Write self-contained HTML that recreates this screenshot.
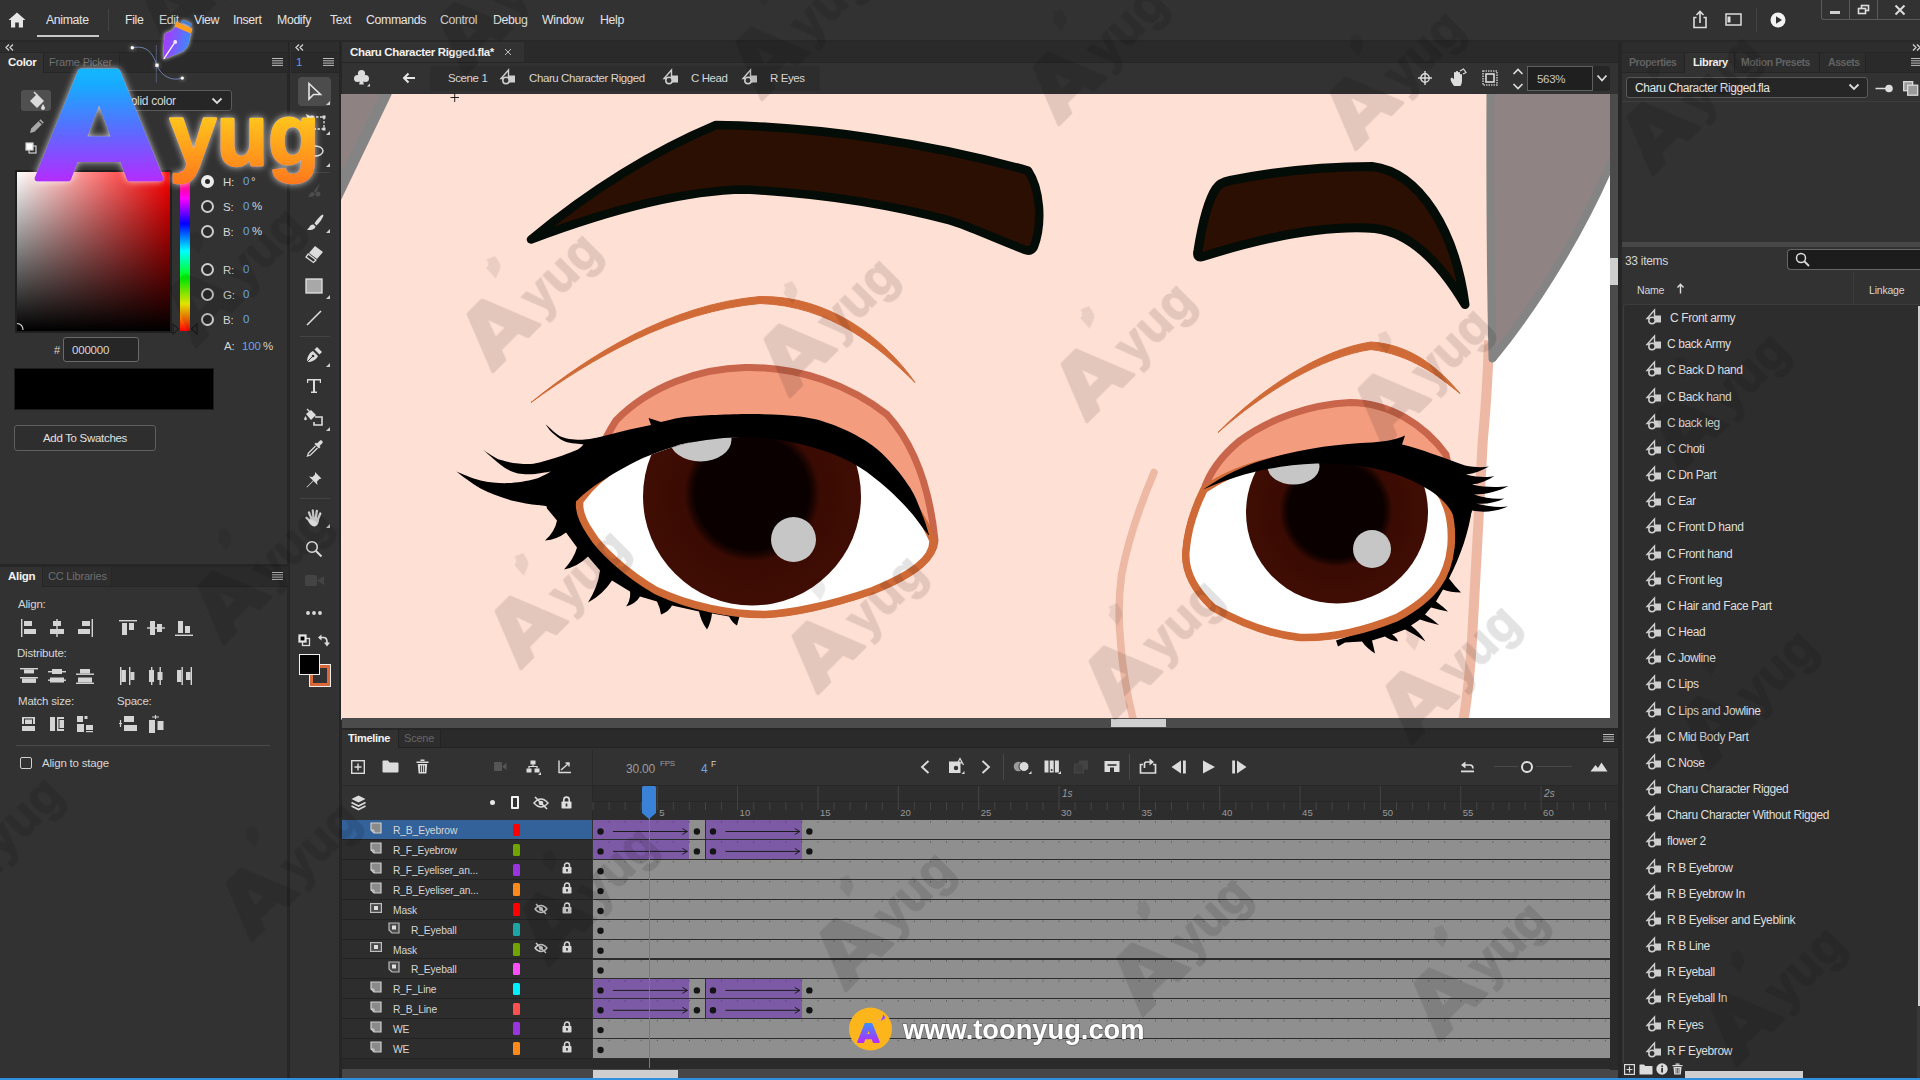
<!DOCTYPE html>
<html lang="en"><head><meta charset="utf-8"><title>Animate - Charu Character Rigged.fla</title>
<style>
*{box-sizing:border-box;margin:0;padding:0}
html,body{width:1920px;height:1080px;overflow:hidden;background:#323232;font-family:"Liberation Sans",sans-serif;font-size:12px;color:#d8d8d8}
.a{position:absolute}
.t{position:absolute;white-space:nowrap;line-height:14px;height:14px;font-size:11.5px;color:#d6d6d6;letter-spacing:-0.2px}
.b{font-weight:bold;color:#f2f2f2}
.dim{color:#6e6e6e}
.blue{color:#6aa5e6}
svg{position:absolute;overflow:visible}
.ic{fill:#dcdcdc}
.ics{fill:none;stroke:#dcdcdc}
</style></head><body>

<!-- p1_frame -->
<div class="a" style="left:0;top:0;width:1920px;height:40px;background:#323232"></div>
<div class="a" style="left:0;top:40px;width:1920px;height:2px;background:#282828"></div>
<svg style="left:8px;top:12px" width="18" height="16" viewBox="0 0 18 16"><path d="M9 0.5 L0.5 8 H3 V15.5 H7.2 V10.5 H10.8 V15.5 H15 V8 H17.5 Z" fill="#e6e6e6"/></svg>
<div class="t" style="left:46px;top:13px;font-size:12.3px;color:#e4e4e4;letter-spacing:-0.35px">Animate</div>
<div class="t" style="left:125px;top:13px;font-size:12.3px;color:#e4e4e4;letter-spacing:-0.35px">File</div>
<div class="t" style="left:159px;top:13px;font-size:12.3px;color:#e4e4e4;letter-spacing:-0.35px">Edit</div>
<div class="t" style="left:194px;top:13px;font-size:12.3px;color:#e4e4e4;letter-spacing:-0.35px">View</div>
<div class="t" style="left:233px;top:13px;font-size:12.3px;color:#e4e4e4;letter-spacing:-0.35px">Insert</div>
<div class="t" style="left:277px;top:13px;font-size:12.3px;color:#e4e4e4;letter-spacing:-0.35px">Modify</div>
<div class="t" style="left:330px;top:13px;font-size:12.3px;color:#e4e4e4;letter-spacing:-0.35px">Text</div>
<div class="t" style="left:366px;top:13px;font-size:12.3px;color:#e4e4e4;letter-spacing:-0.35px">Commands</div>
<div class="t" style="left:440px;top:13px;font-size:12.3px;color:#e4e4e4;letter-spacing:-0.35px">Control</div>
<div class="t" style="left:493px;top:13px;font-size:12.3px;color:#e4e4e4;letter-spacing:-0.35px">Debug</div>
<div class="t" style="left:542px;top:13px;font-size:12.3px;color:#e4e4e4;letter-spacing:-0.35px">Window</div>
<div class="t" style="left:600px;top:13px;font-size:12.3px;color:#e4e4e4;letter-spacing:-0.35px">Help</div>
<div class="a" style="left:37px;top:35px;width:62px;height:2px;background:#c8c8c8"></div>
<div class="a" style="left:108px;top:9px;width:1px;height:22px;background:#444"></div>
<svg style="left:1691px;top:10px" width="18" height="20" viewBox="0 0 18 20"><path class="ics" stroke-width="1.6" d="M5.5 7.5H3V17.5H15V7.5H12.5M9 13V2M5.5 5L9 1.5L12.5 5"/></svg>
<svg style="left:1725px;top:13px" width="18" height="14" viewBox="0 0 18 14"><rect x="1" y="1" width="15" height="11" class="ics" stroke-width="1.5"/><rect x="2.5" y="3.5" width="3" height="6" class="ic"/></svg>
<div class="a" style="left:1756px;top:8px;width:1px;height:24px;background:#444"></div>
<svg style="left:1770px;top:12px" width="16" height="16" viewBox="0 0 16 16"><circle cx="8" cy="8" r="7.5" fill="#f2f2f2"/><path d="M6 4.2V11.8L12 8Z" fill="#323232"/></svg>
<div class="a" style="left:1821px;top:-3px;width:99px;height:23px;border:1px solid #5a5a5a;border-right:none;border-radius:3px 0 0 3px"></div>
<div class="a" style="left:1849px;top:0;width:1px;height:19px;background:#5a5a5a"></div>
<div class="a" style="left:1877px;top:0;width:1px;height:19px;background:#5a5a5a"></div>
<div class="a" style="left:1830px;top:11px;width:10px;height:3px;background:#cfcfcf"></div>
<svg style="left:1857px;top:4px" width="14" height="12" viewBox="0 0 14 12"><rect x="4.5" y="1.5" width="7" height="5" class="ics" stroke-width="1.6"/><rect x="1.5" y="4.5" width="7" height="5" fill="#323232" stroke="#dcdcdc" stroke-width="1.6"/></svg>
<svg style="left:1894px;top:4px" width="12" height="12" viewBox="0 0 12 12"><path d="M1.5 1.5L10.5 10.5M10.5 1.5L1.5 10.5" class="ics" stroke-width="2"/></svg>
<div class="a" style="left:287px;top:42px;width:3px;height:1036px;background:#262626"></div>
<div class="a" style="left:338.500px;top:42px;width:3px;height:1036px;background:#262626"></div>
<div class="a" style="left:1618px;top:42px;width:4px;height:1036px;background:#262626"></div>
<div class="a" style="left:0;top:1078px;width:1920px;height:2px;background:#2f8fe0"></div>
<!-- p2_stage -->
<div class="a" style="left:342px;top:42px;width:1276px;height:21px;background:#2a2a2a"></div>
<div class="a" style="left:342px;top:42px;width:182px;height:21px;background:#323232"></div>
<div class="t b" style="left:350px;top:45px;font-size:11.5px;letter-spacing:-0.35px;color:#f0f0f0">Charu Character Rigged.fla*</div>
<svg style="left:504px;top:48px" width="8" height="8" viewBox="0 0 8 8"><path d="M1 1L7 7M7 1L1 7" stroke="#bdbdbd" stroke-width="1" fill="none"/></svg>
<div class="a" style="left:342px;top:63px;width:1276px;height:31px;background:#323232"></div>
<div class="a" style="left:342px;top:62px;width:1276px;height:1px;background:#262626"></div>
<div class="a" style="left:430px;top:66px;width:390px;height:25px;background:#2d2d2d"></div>
<svg style="left:353px;top:69px" width="18" height="18" viewBox="0 0 18 18"><circle cx="8.5" cy="4.5" r="3.6" class="ic"/><circle cx="4.6" cy="9.5" r="3.6" class="ic"/><circle cx="12.4" cy="9.5" r="3.6" class="ic"/><path d="M7.5 8 H9.5 L10.8 15.5 H6.2 Z" class="ic"/><path d="M14 17.5h3v-3z" class="ic"/></svg>
<svg style="left:402px;top:72px" width="14" height="12" viewBox="0 0 14 12"><path d="M13 6H3M6.5 1.5L2 6L6.5 10.5" stroke="#e6e6e6" stroke-width="2" fill="none"/></svg>
<div class="t" style="left:448px;top:71px;font-size:11.500px;letter-spacing:-0.400px">Scene 1</div>
<svg style="left:499px;top:69px" width="18" height="16" viewBox="0 0 18 16"><path d="M9.5 1 L2 9.5 H9.5Z" fill="none" stroke="#cfcfcf" stroke-width="1.4"/><rect x="9" y="6.5" width="7" height="7" fill="#cfcfcf"/><circle cx="7" cy="11.5" r="3.2" fill="#323232" stroke="#cfcfcf" stroke-width="1.5"/></svg>
<div class="t" style="left:529px;top:71px;font-size:11.500px;letter-spacing:-0.400px">Charu Character Rigged</div>
<svg style="left:662px;top:69px" width="18" height="16" viewBox="0 0 18 16"><path d="M9.5 1 L2 9.5 H9.5Z" fill="none" stroke="#cfcfcf" stroke-width="1.4"/><rect x="9" y="6.5" width="7" height="7" fill="#cfcfcf"/><circle cx="7" cy="11.5" r="3.2" fill="#323232" stroke="#cfcfcf" stroke-width="1.5"/></svg>
<div class="t" style="left:691px;top:71px;font-size:11.500px;letter-spacing:-0.400px">C Head</div>
<svg style="left:741px;top:69px" width="18" height="16" viewBox="0 0 18 16"><path d="M9.5 1 L2 9.5 H9.5Z" fill="none" stroke="#cfcfcf" stroke-width="1.4"/><rect x="9" y="6.5" width="7" height="7" fill="#cfcfcf"/><circle cx="7" cy="11.5" r="3.2" fill="#323232" stroke="#cfcfcf" stroke-width="1.5"/></svg>
<div class="t" style="left:770px;top:71px;font-size:11.500px;letter-spacing:-0.400px">R Eyes</div>
<svg style="left:1418px;top:71px" width="14" height="14" viewBox="0 0 14 14"><circle cx="7" cy="7" r="4.2" class="ics" stroke-width="1.4"/><path d="M7 0V14M0 7H14" class="ics" stroke-width="1.4"/></svg>
<svg style="left:1448px;top:68px" width="20" height="20" viewBox="0 0 20 20"><path d="M6 18 C3 14 2 11 3 10 C4 9.3 5 10 6 11.5 V5 C6 3.6 8 3.6 8 5 V9 V4 C8 2.6 10 2.6 10 4 V9 V5 C10 3.6 12 3.6 12 5 V10 V7 C12 5.6 14 5.6 14 7 V13 C14 15 13 17 12.5 18 Z" class="ic"/><path d="M12 3 L15.5 1 L18 4.5 L15 6" class="ics" stroke-width="1.2"/></svg>
<svg style="left:1482px;top:70px" width="16" height="16" viewBox="0 0 16 16"><rect x="1" y="1" width="14" height="14" fill="none" stroke="#bdbdbd" stroke-width="1.6" stroke-dasharray="1.5 1"/><rect x="4" y="4" width="8" height="8" class="ics" stroke-width="1.6"/></svg>
<svg style="left:1512px;top:67px" width="12" height="24" viewBox="0 0 12 24"><path d="M1.5 7L6 2.5L10.5 7M1.5 17L6 21.5L10.5 17" class="ics" stroke-width="1.7"/></svg>
<div class="a" style="left:1527px;top:66px;width:66px;height:25px;background:#1f1f1f;border:1px solid #5f5f5f"></div>
<div class="t" style="left:1537px;top:72px;font-size:11.500px;color:#c8c8c8;letter-spacing:-0.300px">563%</div>
<div class="a" style="left:1593px;top:66px;width:17px;height:25px;background:#262626;border-radius:0 3px 3px 0"></div>
<svg style="left:1596px;top:74px" width="12" height="9" viewBox="0 0 12 9"><path d="M1.5 1.5L6 6.5L10.5 1.5" class="ics" stroke-width="1.8"/></svg>
<svg style="left:341px;top:93.500px" width="1269" height="625.500" viewBox="341 93.500 1269 625.500">
<defs>
<clipPath id="stg"><rect x="341" y="93.500" width="1269" height="625.500"/></clipPath>
<radialGradient id="irisL" cx="752" cy="493" r="109" gradientUnits="userSpaceOnUse"><stop offset="0" stop-color="#0a0000"/><stop offset="0.520" stop-color="#0a0000"/><stop offset="0.570" stop-color="#1e0501"/><stop offset="0.620" stop-color="#3a0b03"/><stop offset="1" stop-color="#3f0d03"/></radialGradient>
<radialGradient id="irisR" cx="1336" cy="510" r="91" gradientUnits="userSpaceOnUse"><stop offset="0" stop-color="#0a0000"/><stop offset="0.520" stop-color="#0a0000"/><stop offset="0.570" stop-color="#1e0501"/><stop offset="0.620" stop-color="#3a0b03"/><stop offset="1" stop-color="#3f0d03"/></radialGradient>
<clipPath id="eyeL"><path d="M578 500 C600 478 640 454 690 442 C740 432 800 434 850 458 C890 478 915 508 932 540 C934 556 918 572 873 590 C830 605 790 613 765 614 C730 614 690 606 656 590 C625 572 600 548 591 533 C582 520 578 510 578 500Z"/></clipPath>
<clipPath id="eyeR"><path d="M1204 489 C1235 474 1270 464 1316 462 C1360 460 1400 468 1438 494 C1448 505 1453 520 1451 546 C1448 575 1436 596 1397 617 C1360 632 1330 638 1300 637 C1270 634 1240 622 1213 607 C1195 590 1184 570 1186 550 C1188 525 1196 505 1204 489Z"/></clipPath>
</defs>
<g clip-path="url(#stg)">
<rect x="340" y="92" width="1272" height="630" fill="#ffe0d4"/>
<path d="M1612 160 C1580 230 1540 300 1492 360 L1482.800 440 L1472 640 Q1469.500 685 1462.500 726 L1612 726Z" fill="#ffffff"/>
<path d="M1489 340 C1487 400 1483.500 430 1482.800 440 L1472 640 Q1469.500 685 1462.500 726" fill="none" stroke="#edb9a5" stroke-width="10"/>
<path d="M1490.500 86 C1490 200 1491 290 1492.500 358 C1540 300 1585 225 1614 155 L1620 86Z" fill="#908383" stroke="#848484" stroke-width="8" stroke-linejoin="round"/>
<path d="M340 92 L384 92 L340 180Z" fill="#8f8282"/>
<path d="M380.900 92 L392.600 92 L340 201.600 L340 174Z" fill="#848484"/>
<path d="M1154 472 C1140 505 1127 545 1121.600 574 C1118 600 1119 625 1120.500 640 C1122 665 1127 695 1134.500 724" fill="none" stroke="#edb9a5" stroke-width="7.500" stroke-linecap="round"/>
<path d="M531 239 C600 182 660 148 716 124.500 C820 126 930 143 1028 170 C1040 188 1043 222 1034 246 Q1031 252 1024 249 C990 236 970 226 950 220 C890 204 820 193 745 189 C680 190 600 213 531 239Z" fill="#2b0f02" stroke="#040c07" stroke-width="8.500" stroke-linejoin="round"/>
<path d="M1203 256 Q1196 258 1198 250 C1202 225 1208 200 1216 188 Q1220 182 1230 180 C1270 172 1320 166 1372 166 C1420 172 1455 230 1465 304 C1440 262 1410 232 1375 228 C1320 224 1260 238 1203 256Z" fill="#2b0f02" stroke="#040c07" stroke-width="9" stroke-linejoin="round"/>
<path d="M531 402 C590 354 670 304 760 296 C830 295 885 339 915 382 C880 347 830 305 760 303 C672 311 590 359 531 402Z" fill="#d06a36" stroke="#d06a36" stroke-width="1"/>
<path d="M1218 432 C1260 389 1320 349 1371 341.500 C1412 344 1440 369 1460 393 C1438 375 1410 354 1371 349 C1322 356 1262 393 1218 432Z" fill="#d06a36" stroke="#d06a36" stroke-width="1"/>
<path d="M580 500 C590 470 600 445 616 420 C650 385 700 368 745 367 C800 366 850 385 887 414 C915 445 930 490 935 540 C934 556 918 572 873 590 C830 605 790 613 765 614 C730 614 690 606 656 590 C625 572 600 548 591 533 C582 520 578 510 580 500Z" fill="#f39c7e" stroke="#c8654a" stroke-width="7"/>
<path d="M546 504 L583 494 L600 545 L630 575 L660 593 L700 607 L740 614 L737 625 Q732 622 729 616 L712 613 Q711 622 707 629 Q701 621 699 611 L672 605 Q669 611 661 614 Q660 607 657 601 L640 596 Q636 603 626 606 Q631 599 630 591 L612 580 Q603 594 588 602 Q598 586 600 570 L588 556 Q578 566 564 569 Q574 558 577 547 L566 532 Q557 539 545 540 Q555 531 557 520 L547 508 Z" fill="#000"/>
<path d="M580 500 C600 472 640 446 690 434 C740 424 800 426 850 450 C890 470 915 500 933 540 C934 556 918 572 873 590 C830 605 790 613 765 614 C730 614 690 606 656 590 C625 572 600 548 591 533 C582 520 578 510 580 500Z" fill="#ffffff" stroke="#cf6a36" stroke-width="7.500"/>
<g clip-path="url(#eyeL)"><circle cx="752" cy="496" r="109" fill="url(#irisL)"/><circle cx="793.5" cy="539" r="22.5" fill="#c6c6c6"/><ellipse cx="700.5" cy="439" rx="31" ry="22" fill="#c6c6c6"/></g>
<path d="M456.2 471 C460.3 472.5 472.0 478.0 480.6 479.9 C489.2 481.8 498.7 482.8 507.7 482.6 C516.7 482.4 527.6 480.4 534.8 478.5 C542.0 476.6 548.3 472.2 551.0 471.0 C547.2 471.5 535.2 474.1 528.0 473.8 C520.8 473.5 515.1 473.1 507.7 469.0 C500.2 464.9 487.4 452.7 483.3 449.4 C486.2 451.1 493.6 457.2 501.0 459.6 C508.4 462.0 520.1 463.6 528.0 463.6 C535.9 463.6 540.4 461.9 548.3 459.6 C556.2 457.4 569.5 452.7 575.4 450.1 C581.3 447.5 582.1 445.0 583.5 444.0 C580.4 443.5 570.2 443.0 565.0 441.0 C559.8 439.0 555.2 434.9 552.0 432.0 C548.8 429.1 546.7 425.1 545.6 423.7 C548.3 425.9 555.8 434.0 561.9 436.6 C568.0 439.2 575.9 439.3 582.2 439.3 C588.5 439.3 596.9 437.1 599.8 436.6 L629.6 429 L651 424.5 L648.5 417.6 L661 421.5 C665.8 420.6 674.7 417.3 690.0 416.0 C705.3 414.7 734.7 413.6 753.0 413.6 C771.3 413.6 786.9 414.3 800.0 416.0 C813.1 417.7 821.1 420.0 831.6 423.8 C842.1 427.6 853.8 433.2 863.0 438.8 C872.2 444.4 878.8 449.6 886.7 457.7 C894.6 465.8 904.2 477.9 910.3 487.6 C916.3 497.3 919.9 508.1 923.0 516.0 C926.1 523.9 928.2 531.7 929.2 534.8 C928.7 534.3 929.1 535.5 926.0 531.6 C922.9 527.7 916.8 518.5 910.3 511.2 C903.8 503.9 895.1 495.0 886.7 487.6 C878.3 480.2 869.2 472.8 860.0 467.0 C850.8 461.2 841.6 456.9 831.6 453.0 C821.6 449.1 810.5 446.0 800.0 443.5 C789.5 441.0 780.5 439.1 768.7 438.0 C756.9 436.9 742.1 436.5 729.0 437.2 C715.9 437.9 699.8 440.3 690.0 442.0 C680.2 443.7 678.0 444.8 670.2 447.4 C662.4 450.0 652.0 453.4 643.0 457.5 C634.0 461.6 625.0 466.5 616.0 471.8 C607.0 477.1 595.5 484.7 589.0 489.4 C582.5 494.1 578.8 498.4 576.8 500.2 L547 505.6 C545.0 505.4 541.3 505.4 534.8 504.3 C528.2 503.2 516.7 501.5 507.7 498.8 C498.7 496.1 489.2 492.6 480.6 488.0 C472.0 483.4 460.3 473.8 456.2 471.0Z" fill="#000"/>
<path d="M1204 489 C1210 470 1222 455 1240 440 C1270 418 1310 404 1350 402 C1390 402 1425 425 1446 454 C1452 480 1453 520 1451 546 C1448 575 1436 596 1397 617 C1360 632 1330 638 1300 637 C1270 634 1240 622 1213 607 C1195 590 1184 570 1186 550 C1188 525 1196 505 1204 489Z" fill="#f39c7e" stroke="#c8654a" stroke-width="7"/>
<path d="M1472 508 C1469 530 1461 555 1449 578 Q1455 586 1461 592 Q1450 592 1443 589 L1436 601 Q1443 606 1448 611 Q1438 609 1431 607 L1425 614 Q1433 619 1439 624.500 Q1428 622 1420 619 L1411 625 Q1420 632 1425.500 641 Q1415 634 1405 629 L1392 634 Q1397 637 1398 641 Q1390 640 1385 636 L1372 640 Q1374 648 1375 653 Q1366 647 1362 641 L1345 642 L1338 646 L1336 640 L1360 632 L1397 617 C1436 596 1448 575 1451 546 C1453 520 1448 505 1438 494 Z" fill="#000"/>
<path d="M1204 489 C1235 468 1270 457 1316 455 C1360 453 1400 461 1438 489 C1448 503 1453 520 1451 546 C1448 575 1436 596 1397 617 C1360 632 1330 638 1300 637 C1270 634 1240 622 1213 607 C1195 590 1184 570 1186 550 C1188 525 1196 505 1204 489Z" fill="#ffffff" stroke="#cf6a36" stroke-width="7.500"/>
<g clip-path="url(#eyeR)"><circle cx="1337" cy="512" r="91" fill="url(#irisR)"/><circle cx="1372" cy="548.5" r="19" fill="#c6c6c6"/><ellipse cx="1293.5" cy="466" rx="26" ry="18" fill="#c6c6c6"/></g>
<path d="M1203 489 C1225 474 1245 465 1262 460 C1300 448 1340 443 1372 442 C1385 441 1396 439 1405 435 L1402 444 C1420 448 1445 458 1465 465 C1475 467 1482 467 1489 466 C1482 470 1474 473 1466 474 C1478 477 1488 477 1494.500 475.500 C1488 480 1480 483 1472 484 C1485 487 1498 487 1508.500 485.500 C1498 491 1486 494 1474 494 C1486 498 1496 499 1504.500 498 C1496 502 1486 504 1476 503 C1488 506 1498 507 1508 506 C1494 512 1482 512 1472 510 L1466 530 L1455 520 C1452 508 1442 498 1430 490 C1400 470 1360 462 1316 463 C1270 465 1235 475 1203 489Z" fill="#000"/>
</g>
<path d="M450.500 97H459M454.700 92.500V101.500" stroke="#222" stroke-width="1"/>
</svg>
<div class="a" style="left:1610px;top:94px;width:8px;height:624px;background:#4b4b4b"></div>
<div class="a" style="left:1610px;top:258px;width:8px;height:27px;background:#cfcfcf"></div>
<div class="a" style="left:342px;top:718px;width:1276px;height:10px;background:#4b4b4b"></div>
<div class="a" style="left:1111px;top:719px;width:55px;height:8px;background:#cfcfcf"></div>
<!-- p3_left -->
<div class="a" style="left:0;top:42px;width:288px;height:10px;background:#2d2d2d"></div>
<svg style="left:5px;top:44px" width="9" height="7" viewBox="0 0 9 7"><path d="M4 0.5L1 3.5L4 6.5M8 0.5L5 3.5L8 6.5" stroke="#d0d0d0" stroke-width="1.3" fill="none"/></svg>
<div class="a" style="left:0;top:52px;width:288px;height:21px;background:#2a2a2a;border-top:1px solid #262626;border-bottom:1px solid #262626"></div>
<div class="a" style="left:0;top:53px;width:43px;height:20px;background:#323232"></div>
<div class="a" style="left:43px;top:53px;width:77px;height:19px;background:#2d2d2d;border-right:1px solid #262626;border-left:1px solid #262626"></div>
<div class="t b" style="left:8px;top:55px;font-size:11.5px;letter-spacing:-0.3px">Color</div>
<div class="t dim" style="left:49px;top:55px;font-size:11px;letter-spacing:-0.2px">Frame Picker</div>
<svg style="left:272px;top:58px" width="11" height="8" viewBox="0 0 11 8"><path d="M0 0.5H11M0 2.8H11M0 5.1H11M0 7.4H11" stroke="#bdbdbd" stroke-width="1" fill="none"/></svg>
<div class="a" style="left:21px;top:90px;width:30px;height:21px;background:#505050;border-radius:3px"></div>
<svg style="left:27px;top:91px" width="20" height="19" viewBox="0 0 20 19"><path d="M3 10 L10 3 L17 10 L10 17Z" class="ic"/><path d="M7 1 L10 4" class="ics" stroke-width="1.6"/><path d="M16 13c1 2 2 3 2 4a2 2 0 0 1-4 0c0-1 1-2 2-4z" class="ic"/></svg>
<div class="a" style="left:112px;top:90px;width:120px;height:21px;background:#262626;border:1px solid #5a5a5a;border-radius:3px"></div>
<div class="t" style="left:123px;top:94px;font-size:12px;letter-spacing:-0.3px">Solid color</div>
<svg style="left:211px;top:97px" width="12" height="8" viewBox="0 0 12 8"><path d="M1.5 1.5L6 6L10.5 1.5" class="ics" stroke-width="1.8"/></svg>
<svg style="left:28px;top:117px" width="18" height="18" viewBox="0 0 18 18"><path d="M2 16 L3.2 11.5 L12.5 2.2 L15.8 5.5 L6.5 14.8 Z" fill="#a8a8a8"/><path d="M11 3.8 L14.2 7" stroke="#323232" stroke-width="1.2"/></svg>
<svg style="left:25px;top:142px" width="12" height="12" viewBox="0 0 12 12"><rect x="4" y="4" width="7" height="7" fill="none" stroke="#d0d0d0" stroke-width="1.2"/><rect x="1" y="1" width="7" height="7" fill="#fff" stroke="#d0d0d0" stroke-width="1.2"/></svg>
<div class="a" style="left:15px;top:170px;width:157px;height:163px;background:#1f1f1f"></div>
<div class="a" style="left:17px;top:172px;width:153px;height:159px;background:linear-gradient(to bottom,rgba(0,0,0,0),#000),linear-gradient(to right,#fff,#f00)"></div>
<svg style="left:17px;top:322px" width="8" height="9" viewBox="0 0 8 9"><path d="M0 1.5 A6 6 0 0 1 6 8" stroke="#d8d8d8" stroke-width="1.2" fill="none"/></svg>
<div class="a" style="left:180px;top:171px;width:10px;height:160px;background:linear-gradient(to bottom,#f00 0%,#f0f 17%,#00f 33%,#0ff 50%,#0f0 67%,#ff0 83%,#f00 100%)"></div>
<svg style="left:172px;top:323px" width="26" height="12" viewBox="0 0 26 12"><path d="M1 1L6.5 6L1 11Z M25 1L19.5 6L25 11Z" fill="none" stroke="#1d1d1d" stroke-width="1.2"/></svg>
<div class="a" style="left:201px;top:175px;width:13px;height:13px;border:4.5px solid #ececec;border-radius:50%;background:#262626"></div>
<div class="t" style="left:223px;top:175px;font-size:11.5px">H:</div>
<div class="t blue" style="left:243px;top:174px;font-size:11.5px">0</div>
<div class="t" style="left:251px;top:174px;font-size:11.5px">°</div>
<div class="a" style="left:201px;top:200px;width:13px;height:13px;border:2px solid #cdcdcd;border-radius:50%;background:#2a2a2a"></div>
<div class="t" style="left:223px;top:200px;font-size:11.5px">S:</div>
<div class="t blue" style="left:243px;top:199px;font-size:11.5px">0</div>
<div class="t" style="left:252px;top:199px;font-size:11.5px">%</div>
<div class="a" style="left:201px;top:225px;width:13px;height:13px;border:2px solid #cdcdcd;border-radius:50%;background:#2a2a2a"></div>
<div class="t" style="left:223px;top:225px;font-size:11.5px">B:</div>
<div class="t blue" style="left:243px;top:224px;font-size:11.5px">0</div>
<div class="t" style="left:252px;top:224px;font-size:11.5px">%</div>
<div class="a" style="left:201px;top:263px;width:13px;height:13px;border:2px solid #cdcdcd;border-radius:50%;background:#2a2a2a"></div>
<div class="t" style="left:223px;top:263px;font-size:11.5px">R:</div>
<div class="t blue" style="left:243px;top:262px;font-size:11.5px">0</div>
<div class="a" style="left:201px;top:288px;width:13px;height:13px;border:2px solid #cdcdcd;border-radius:50%;background:#2a2a2a"></div>
<div class="t" style="left:223px;top:288px;font-size:11.5px">G:</div>
<div class="t blue" style="left:243px;top:287px;font-size:11.5px">0</div>
<div class="a" style="left:201px;top:313px;width:13px;height:13px;border:2px solid #cdcdcd;border-radius:50%;background:#2a2a2a"></div>
<div class="t" style="left:223px;top:313px;font-size:11.5px">B:</div>
<div class="t blue" style="left:243px;top:312px;font-size:11.5px">0</div>
<div class="t" style="left:224px;top:339px;font-size:11.5px">A:</div>
<div class="t blue" style="left:242px;top:339px;font-size:11.5px">100</div>
<div class="t" style="left:263px;top:339px;font-size:11.5px">%</div>
<div class="t" style="left:54px;top:343px;font-size:11px">#</div>
<div class="a" style="left:63px;top:337px;width:76px;height:25px;background:#262626;border:1px solid #6a6a6a;border-radius:3px"></div>
<div class="t" style="left:72px;top:343px;font-size:11.5px;letter-spacing:-0.2px">000000</div>
<div class="a" style="left:14px;top:368px;width:200px;height:42px;background:#000;border:1px solid #1c1c1c"></div>
<div class="a" style="left:14px;top:425px;width:142px;height:26px;border:1px solid #5f5f5f;border-radius:3px;background:#2e2e2e"></div>
<div class="t" style="left:14px;top:431px;width:142px;text-align:center;font-size:11.5px;letter-spacing:-0.3px;color:#e0e0e0">Add To Swatches</div>
<div class="a" style="left:0;top:564px;width:288px;height:3px;background:#262626"></div>
<div class="a" style="left:0;top:567px;width:288px;height:20px;background:#2a2a2a;border-bottom:1px solid #262626"></div>
<div class="a" style="left:0;top:567px;width:42px;height:20px;background:#323232"></div>
<div class="a" style="left:42px;top:567px;width:70px;height:19px;background:#2d2d2d;border-right:1px solid #262626;border-left:1px solid #262626"></div>
<div class="t b" style="left:8px;top:569px;font-size:11.5px;letter-spacing:-0.3px">Align</div>
<div class="t dim" style="left:48px;top:569px;font-size:11px;letter-spacing:-0.2px">CC Libraries</div>
<svg style="left:272px;top:572px" width="11" height="8" viewBox="0 0 11 8"><path d="M0 0.5H11M0 2.8H11M0 5.1H11M0 7.4H11" stroke="#bdbdbd" stroke-width="1" fill="none"/></svg>
<div class="t" style="left:18px;top:597px;font-size:11.5px">Align:</div>
<div class="t" style="left:17px;top:646px;font-size:11.5px">Distribute:</div>
<div class="t" style="left:18px;top:694px;font-size:11.5px">Match size:</div>
<div class="t" style="left:117px;top:694px;font-size:11.5px">Space:</div>
<svg style="left:20px;top:619px" width="18" height="18" viewBox="0 0 18 18" fill="#d4d4d4"><rect x="1" y="0" width="1.4" height="18"/><rect x="4" y="2" width="8" height="5"/><rect x="4" y="10" width="12" height="5"/></svg>
<svg style="left:48px;top:619px" width="18" height="18" viewBox="0 0 18 18" fill="#d4d4d4"><rect x="8.3" y="0" width="1.4" height="18"/><rect x="5" y="2" width="8" height="5"/><rect x="2" y="10" width="14" height="5"/></svg>
<svg style="left:76px;top:619px" width="18" height="18" viewBox="0 0 18 18" fill="#d4d4d4"><rect x="15.6" y="0" width="1.4" height="18"/><rect x="6" y="2" width="8" height="5"/><rect x="2" y="10" width="12" height="5"/></svg>
<svg style="left:119px;top:619px" width="18" height="18" viewBox="0 0 18 18" fill="#d4d4d4"><rect x="0" y="1" width="18" height="1.4"/><rect x="3" y="4" width="5" height="12"/><rect x="10" y="4" width="5" height="7"/></svg>
<svg style="left:147px;top:619px" width="18" height="18" viewBox="0 0 18 18" fill="#d4d4d4"><rect x="0" y="8.3" width="18" height="1.4"/><rect x="3" y="2" width="5" height="14"/><rect x="10" y="5" width="5" height="8"/></svg>
<svg style="left:175px;top:619px" width="18" height="18" viewBox="0 0 18 18" fill="#d4d4d4"><rect x="0" y="15.6" width="18" height="1.4"/><rect x="3" y="2" width="5" height="12"/><rect x="10" y="7" width="5" height="7"/></svg>
<svg style="left:20px;top:667px" width="18" height="18" viewBox="0 0 18 18" fill="#d4d4d4"><rect x="0" y="1" width="18" height="1.4"/><rect x="4" y="2.4" width="10" height="4"/><rect x="0" y="10" width="18" height="1.4"/><rect x="2" y="11.4" width="14" height="4.5"/></svg>
<svg style="left:48px;top:667px" width="18" height="18" viewBox="0 0 18 18" fill="#d4d4d4"><rect x="0" y="4" width="18" height="1.4"/><rect x="4" y="2" width="10" height="5"/><rect x="0" y="12.5" width="18" height="1.4"/><rect x="2" y="10.5" width="14" height="5"/></svg>
<svg style="left:76px;top:667px" width="18" height="18" viewBox="0 0 18 18" fill="#d4d4d4"><rect x="0" y="6.5" width="18" height="1.4"/><rect x="4" y="2" width="10" height="4.5"/><rect x="0" y="15.6" width="18" height="1.4"/><rect x="2" y="10.5" width="14" height="5"/></svg>
<svg style="left:119px;top:667px" width="18" height="18" viewBox="0 0 18 18" fill="#d4d4d4"><rect x="1" y="0" width="1.4" height="18"/><rect x="2.4" y="3" width="4.5" height="12"/><rect x="10" y="0" width="1.4" height="18"/><rect x="11.4" y="5" width="4" height="8"/></svg>
<svg style="left:147px;top:667px" width="18" height="18" viewBox="0 0 18 18" fill="#d4d4d4"><rect x="4" y="0" width="1.4" height="18"/><rect x="2" y="3" width="5" height="12"/><rect x="12.5" y="0" width="1.4" height="18"/><rect x="10.5" y="5" width="5" height="8"/></svg>
<svg style="left:175px;top:667px" width="18" height="18" viewBox="0 0 18 18" fill="#d4d4d4"><rect x="6.5" y="0" width="1.4" height="18"/><rect x="2" y="3" width="4.5" height="12"/><rect x="15.6" y="0" width="1.4" height="18"/><rect x="11" y="5" width="4.6" height="8"/></svg>
<svg style="left:20px;top:715px" width="18" height="18" viewBox="0 0 18 18" fill="#d4d4d4"><path d="M2 2V9H4V3.4H13V9H15V2Z"/><rect x="5" y="4.5" width="7" height="4.5"/><rect x="2" y="11" width="13" height="5"/></svg>
<svg style="left:48px;top:715px" width="18" height="18" viewBox="0 0 18 18" fill="#d4d4d4"><rect x="2" y="2" width="5" height="14"/><path d="M9 2H16V4H10.5V14H16V16H9Z"/><rect x="11.5" y="5" width="4.5" height="8"/></svg>
<svg style="left:76px;top:715px" width="18" height="18" viewBox="0 0 18 18" fill="#d4d4d4"><rect x="1" y="1" width="6" height="6"/><rect x="8.5" y="1" width="3" height="3"/><rect x="1" y="9" width="7" height="8"/><rect x="10" y="10" width="7" height="5"/><rect x="10" y="16" width="7" height="1.2"/></svg>
<svg style="left:119px;top:715px" width="18" height="18" viewBox="0 0 18 18" fill="#d4d4d4"><rect x="5" y="1" width="10" height="6"/><rect x="5" y="10" width="13" height="6"/><path d="M1.5 5V12M0 8.5H3" stroke="#d4d4d4" stroke-width="1.2"/></svg>
<svg style="left:147px;top:715px" width="18" height="18" viewBox="0 0 18 18" fill="#d4d4d4"><rect x="2" y="5" width="6" height="13"/><rect x="10.5" y="6" width="6" height="9"/><path d="M5 2H12M8.5 0V4" stroke="#d4d4d4" stroke-width="1.2"/></svg>
<div class="a" style="left:16px;top:745px;width:254px;height:1px;background:#4a4a4a"></div>
<div class="a" style="left:20px;top:757px;width:12px;height:12px;border:1.5px solid #d0d0d0;border-radius:2px"></div>
<div class="t" style="left:42px;top:756px;font-size:11.5px">Align to stage</div>
<!-- p4_tools -->
<div class="a" style="left:291px;top:42px;width:48px;height:10px;background:#2d2d2d"></div>
<svg style="left:295px;top:44px" width="9" height="7" viewBox="0 0 9 7"><path d="M4 0.5L1 3.5L4 6.5M8 0.5L5 3.5L8 6.5" stroke="#d0d0d0" stroke-width="1.3" fill="none"/></svg>
<div class="a" style="left:291px;top:52px;width:48px;height:21px;background:#2a2a2a;border-top:1px solid #262626;border-bottom:1px solid #262626"></div>
<div class="t" style="left:296px;top:55px;font-size:11.5px;color:#5f9ee6">1</div>
<svg style="left:323px;top:58px" width="11" height="8" viewBox="0 0 11 8"><path d="M0 0.5H11M0 2.8H11M0 5.1H11M0 7.4H11" stroke="#bdbdbd" stroke-width="1" fill="none"/></svg>
<div class="a" style="left:298px;top:77px;width:33px;height:29px;background:#4c4c4c;border-radius:4px"></div>
<svg style="left:306px;top:82px" width="18" height="20" viewBox="0 0 18 20"><path d="M3 1.5 V17 L7.5 12.5 H14.5 Z" fill="none" stroke="#e6e6e6" stroke-width="1.6" stroke-linejoin="miter"/></svg>
<svg style="left:326px;top:101px" width="4" height="4" viewBox="0 0 4 4"><path d="M4 0V4H0Z" fill="#cfcfcf"/></svg>
<svg style="left:305px;top:113px" width="22" height="20" viewBox="0 0 22 20"><path d="M1 1 L9 5 L4 11Z" fill="#dcdcdc"/><rect x="7" y="4" width="12" height="12" fill="none" stroke="#dcdcdc" stroke-width="1.3" stroke-dasharray="2.5 1.5"/><rect x="5.5" y="2.5" width="3" height="3" fill="#dcdcdc"/><rect x="17.5" y="2.5" width="3" height="3" fill="#dcdcdc"/><rect x="5.5" y="14.5" width="3" height="3" fill="#dcdcdc"/><rect x="17.5" y="14.5" width="3" height="3" fill="#dcdcdc"/></svg>
<svg style="left:326px;top:131px" width="4" height="4" viewBox="0 0 4 4"><path d="M4 0V4H0Z" fill="#cfcfcf"/></svg>
<svg style="left:305px;top:144px" width="20" height="18" viewBox="0 0 20 18"><ellipse cx="10" cy="7" rx="8" ry="5" fill="none" stroke="#dcdcdc" stroke-width="1.5"/><path d="M5 11 C3 13 4 16 7 17" fill="none" stroke="#dcdcdc" stroke-width="1.3"/></svg>
<svg style="left:326px;top:163px" width="4" height="4" viewBox="0 0 4 4"><path d="M4 0V4H0Z" fill="#cfcfcf"/></svg>
<div class="a" style="left:300px;top:172px;width:30px;height:1px;background:#444"></div>
<svg style="left:305px;top:181px" width="18" height="18" viewBox="0 0 18 18"><path d="M15 2 L9 10 L11 12 Z M8 11 C5 11 5 14 3 16 C6 16.5 10 15 10 13Z" fill="#4d4d4d"/><circle cx="13" cy="13" r="2.5" fill="#4d4d4d"/></svg>
<svg style="left:305px;top:213px" width="20" height="20" viewBox="0 0 20 20"><path d="M17.5 1.5 C15 3 11 7.5 9.5 10.5 L11.5 12.5 C14 10.5 17.5 5.5 18.5 2.5Z" fill="#dcdcdc"/><path d="M8.5 11.5 C5 11 5 14.5 2 16.5 C5.5 18 10.5 16 10.5 13.5Z" fill="#dcdcdc"/></svg>
<svg style="left:326px;top:229px" width="4" height="4" viewBox="0 0 4 4"><path d="M4 0V4H0Z" fill="#cfcfcf"/></svg>
<svg style="left:304px;top:244px" width="22" height="20" viewBox="0 0 22 20"><path d="M11 2 L19 8 L13 15 L5 9Z" fill="#dcdcdc"/><path d="M4.2 10 L12 16 L9.5 18.5 L2 13 Z" fill="none" stroke="#dcdcdc" stroke-width="1.3"/></svg>
<svg style="left:305px;top:278px" width="18" height="16" viewBox="0 0 18 16"><rect x="1" y="1" width="16" height="14" fill="#a8a8a8" stroke="#e2e2e2" stroke-width="1.3"/></svg>
<svg style="left:326px;top:295px" width="4" height="4" viewBox="0 0 4 4"><path d="M4 0V4H0Z" fill="#cfcfcf"/></svg>
<svg style="left:306px;top:310px" width="16" height="16" viewBox="0 0 16 16"><path d="M1 15L15 1" stroke="#dcdcdc" stroke-width="1.6"/></svg>
<div class="a" style="left:300px;top:336px;width:30px;height:1px;background:#444"></div>
<svg style="left:304px;top:345px" width="20" height="20" viewBox="0 0 20 20"><path d="M3 17 C3 12 5 8 9 6 L14 11 C12 15 8 17 3 17Z" fill="#dcdcdc"/><path d="M10.5 4.5 L13 2 L18 7 L15.5 9.5Z" fill="#dcdcdc"/><circle cx="9" cy="11" r="1.3" fill="#323232"/><path d="M3 17L8.5 11.5" stroke="#323232" stroke-width="1"/></svg>
<svg style="left:326px;top:363px" width="4" height="4" viewBox="0 0 4 4"><path d="M4 0V4H0Z" fill="#cfcfcf"/></svg>
<svg style="left:306px;top:378px" width="16" height="16" viewBox="0 0 16 16"><path d="M1 1H15V5H13.8V2.6H9V13.6H11V15H5V13.6H7V2.6H2.2V5H1Z" fill="#dcdcdc"/></svg>
<svg style="left:304px;top:408px" width="22" height="20" viewBox="0 0 22 20"><path d="M2 6 L7 2 L12 7 L7 12Z" fill="#dcdcdc"/><path d="M3 1 L6 4" stroke="#dcdcdc" stroke-width="1.3"/><path d="M11 9H18V17H10V14" fill="none" stroke="#dcdcdc" stroke-width="1.6"/><path d="M1.5 8c.8 1.5 1.3 2 1.3 3a1.3 1.3 0 0 1-2.6 0c0-1 .5-1.5 1.300-3z" fill="#dcdcdc"/></svg>
<svg style="left:326px;top:427px" width="4" height="4" viewBox="0 0 4 4"><path d="M4 0V4H0Z" fill="#cfcfcf"/></svg>
<svg style="left:305px;top:439px" width="20" height="20" viewBox="0 0 20 20"><path d="M15 1.5 C16.5 0.5 18.5 2.5 17.5 4 L14.5 7 L15.5 8 L14 9.5 L9.5 5 L11 3.5 L12 4.5Z" fill="#dcdcdc"/><path d="M10.5 7 L3.5 14 L2.5 17 L5.5 16 L12.5 9" fill="none" stroke="#dcdcdc" stroke-width="1.3"/></svg>
<svg style="left:305px;top:471px" width="18" height="18" viewBox="0 0 18 18"><path d="M10 1 L16.5 7.5 L14.5 8 L12 10.5 L12.5 14 L8.5 10 L2 16.5 L1.5 16 L8 9.5 L4 5.5 L7.5 6 L10 3.500Z" fill="#dcdcdc"/></svg>
<div class="a" style="left:300px;top:498px;width:30px;height:1px;background:#444"></div>
<svg style="left:304px;top:508px" width="20" height="20" viewBox="0 0 20 20"><path d="M7.500 11L5 4.500M9.500 10L8.800 2.500M11.800 10L12.800 3M13.800 11.500L16.300 5.500M7 14L2.500 9.800" fill="none" stroke="#dcdcdc" stroke-width="2.300" stroke-linecap="round"/><path d="M6 10.500 C8 9 13 9 15 11 C15.500 14 13.500 18 10.500 18.500 C7.500 18.500 5 15 4 12.500Z" fill="#dcdcdc"/></svg>
<svg style="left:326px;top:524px" width="4" height="4" viewBox="0 0 4 4"><path d="M4 0V4H0Z" fill="#cfcfcf"/></svg>
<svg style="left:305px;top:540px" width="18" height="18" viewBox="0 0 18 18"><circle cx="7" cy="7" r="5.3" fill="none" stroke="#dcdcdc" stroke-width="1.6"/><path d="M11 11L16.500 16.500" stroke="#dcdcdc" stroke-width="2"/></svg>
<svg style="left:305px;top:574px" width="20" height="13" viewBox="0 0 20 13"><rect x="0" y="1" width="12" height="11" rx="1.5" fill="#444"/><path d="M12 6.500L19 2V11Z" fill="#444"/></svg>
<svg style="left:306px;top:611px" width="16" height="4" viewBox="0 0 16 4"><circle cx="2" cy="2" r="1.900" fill="#dcdcdc"/><circle cx="8" cy="2" r="1.900" fill="#dcdcdc"/><circle cx="14" cy="2" r="1.900" fill="#dcdcdc"/></svg>
<svg style="left:298px;top:634px" width="13" height="13" viewBox="0 0 13 13"><rect x="4.500" y="4.500" width="7" height="7" fill="#323232" stroke="#dcdcdc" stroke-width="1.300"/><rect x="1" y="1" width="7" height="7" fill="#fff" stroke="#dcdcdc" stroke-width="1.300"/><rect x="2.500" y="2.500" width="4" height="4" fill="#000"/></svg>
<svg style="left:317px;top:634px" width="13" height="13" viewBox="0 0 13 13"><path d="M2 3.500H6.500C9 3.500 10 5.500 10 8V11" fill="none" stroke="#dcdcdc" stroke-width="1.700"/><path d="M4.500 0.500L1 3.500L4.500 6.500Z M7 8.500H13L10 12.500Z" fill="#dcdcdc"/></svg>
<div class="a" style="left:310px;top:665px;width:20px;height:21px;border:3px solid #d9683a;outline:1px solid #eee;background:#323232"></div>
<div class="a" style="left:299px;top:654px;width:21px;height:21px;background:#000;border:1.500px solid #f0f0f0"></div>
<!-- p5_timeline -->
<div class="a" style="left:342px;top:728px;width:1276px;height:2px;background:#262626"></div>
<div class="a" style="left:342px;top:730px;width:1276px;height:18px;background:#2a2a2a;border-bottom:1px solid #222"></div>
<div class="a" style="left:342px;top:730px;width:56px;height:18px;background:#323232"></div>
<div class="a" style="left:398px;top:730px;width:43px;height:17px;background:#2d2d2d;border-left:1px solid #232323;border-right:1px solid #232323"></div>
<div class="t b" style="left:348px;top:731px;font-size:11px;letter-spacing:-0.3px">Timeline</div>
<div class="t dim" style="left:404px;top:731px;font-size:11px;letter-spacing:-0.2px;color:#666">Scene</div>
<svg style="left:1603px;top:734px" width="11" height="8" viewBox="0 0 11 8"><path d="M0 0.5H11M0 2.8H11M0 5.1H11M0 7.4H11" stroke="#bdbdbd" stroke-width="1" fill="none"/></svg>
<div class="a" style="left:342px;top:748px;width:1276px;height:38px;background:#323232"></div>
<div class="a" style="left:342px;top:785px;width:1276px;height:1px;background:#282828"></div>
<div class="a" style="left:592px;top:750px;width:1px;height:70px;background:#282828"></div>
<svg style="left:351px;top:760px" width="14" height="14" viewBox="0 0 14 14"><rect x="0.7" y="0.7" width="12.600" height="12.600" fill="none" stroke="#dcdcdc" stroke-width="1.400"/><path d="M7 3.500V10.500M3.500 7H10.500" stroke="#dcdcdc" stroke-width="1.400"/></svg>
<svg style="left:382px;top:760px" width="17" height="13" viewBox="0 0 17 13"><path d="M0.500 1.500 Q0.500 0.500 1.500 0.500H6L7.500 2.500H15.500Q16.500 2.500 16.500 3.500V11.500Q16.500 12.500 15.500 12.500H1.500Q0.500 12.500 0.500 11.500Z" fill="#dcdcdc"/></svg>
<svg style="left:416px;top:759px" width="13" height="15" viewBox="0 0 13 15"><path d="M0.500 2.500H12.500V4H0.500Z M4.500 0.500H8.500V2H4.500Z" fill="#dcdcdc"/><path d="M1.800 5H11.200L10.400 14.500H2.600Z" fill="#dcdcdc"/><path d="M4.600 6.500V13M6.500 6.500V13M8.400 6.500V13" stroke="#323232" stroke-width="0.9"/></svg>
<svg style="left:494px;top:761px" width="13" height="11" viewBox="0 0 13 11"><rect x="0" y="1" width="8" height="9" rx="1" fill="#555"/><path d="M8 5.500L12.500 2V9Z" fill="#555"/></svg>
<svg style="left:526px;top:760px" width="15" height="15" viewBox="0 0 15 15"><rect x="4.500" y="0.500" width="5" height="4" fill="#dcdcdc"/><rect x="0.500" y="8.500" width="5" height="4" fill="#dcdcdc"/><rect x="8.500" y="8.500" width="5" height="4" fill="#dcdcdc"/><path d="M7 4.500V6.500M3 8.500V6.500H11V8.500" fill="none" stroke="#dcdcdc" stroke-width="1.200"/><path d="M15 12v3h-3z" fill="#dcdcdc"/></svg>
<svg style="left:558px;top:760px" width="14" height="14" viewBox="0 0 14 14"><path d="M1 0.500V12.500H13" fill="none" stroke="#dcdcdc" stroke-width="1.400"/><path d="M3 10L10.500 3.500M7.500 3H11V6.500" fill="none" stroke="#dcdcdc" stroke-width="1.400"/></svg>
<div class="t" style="left:626px;top:762px;font-size:12px;color:#9c9c9c;letter-spacing:-0.2px">30.00</div>
<div class="t" style="left:660px;top:757px;font-size:8px;color:#9c9c9c">FPS</div>
<div class="t blue" style="left:701px;top:762px;font-size:12px">4</div>
<div class="t" style="left:711px;top:757px;font-size:8.500px;color:#d0d0d0">F</div>
<svg style="left:920px;top:760px" width="10" height="14" viewBox="0 0 10 14"><path d="M8.500 1L2 7L8.500 13" fill="none" stroke="#dcdcdc" stroke-width="1.900"/></svg>
<svg style="left:948px;top:757px" width="18" height="18" viewBox="0 0 18 18"><rect x="1" y="4.500" width="11.500" height="11.500" fill="#dcdcdc"/><circle cx="8" cy="11" r="2.200" fill="#323232"/><path d="M8.500 8L12 1.500L15.500 8M10 5.800H14" fill="none" stroke="#dcdcdc" stroke-width="1.200"/><path d="M16.500 14v3h-3z" fill="#dcdcdc"/></svg>
<svg style="left:981px;top:760px" width="10" height="14" viewBox="0 0 10 14"><path d="M1.500 1L8 7L1.500 13" fill="none" stroke="#dcdcdc" stroke-width="1.900"/></svg>
<div class="a" style="left:1003px;top:754px;width:1px;height:26px;background:#484848"></div>
<svg style="left:1013px;top:760px" width="19" height="14" viewBox="0 0 19 14"><circle cx="5.500" cy="6.500" r="4.800" fill="#9a9a9a"/><circle cx="11" cy="6.500" r="5" fill="#dcdcdc" stroke="#323232" stroke-width="1"/><path d="M18.500 11v3h-3z" fill="#dcdcdc"/></svg>
<svg style="left:1044px;top:760px" width="17" height="14" viewBox="0 0 17 14"><rect x="0.500" y="0.500" width="4" height="12" fill="#dcdcdc"/><rect x="5.700" y="0.500" width="4" height="12" fill="#dcdcdc"/><rect x="10.900" y="0.500" width="4" height="12" fill="#dcdcdc"/><circle cx="7.700" cy="10" r="1" fill="#323232"/><path d="M17 11v3h-3z" fill="#dcdcdc"/></svg>
<svg style="left:1074px;top:760px" width="16" height="14" viewBox="0 0 16 14"><rect x="5" y="0.500" width="9" height="9" fill="#444"/><rect x="0.500" y="4" width="9" height="9" fill="#3c3c3c" stroke="#444"/></svg>
<svg style="left:1104px;top:760px" width="16" height="13" viewBox="0 0 16 13"><path d="M0.500 1H15.500V12H10V7.500H6V12H0.500Z" fill="#dcdcdc"/><path d="M3.500 5H12.500" stroke="#323232" stroke-width="1.600"/></svg>
<div class="a" style="left:1129px;top:754px;width:1px;height:26px;background:#484848"></div>
<svg style="left:1139px;top:758px" width="19" height="17" viewBox="0 0 19 17"><path d="M4 6.500H1.500V15H16.500V6.500H14" fill="none" stroke="#dcdcdc" stroke-width="1.700"/><path d="M5.500 10V6Q5.500 4 7.500 4H11" fill="none" stroke="#dcdcdc" stroke-width="1.700"/><path d="M10.500 0.500L15 4L10.500 7.500Z" fill="#dcdcdc"/></svg>
<svg style="left:1171px;top:760px" width="16" height="14" viewBox="0 0 16 14"><path d="M10 0.500V13.500L0.500 7Z" fill="#dcdcdc"/><rect x="12" y="0.500" width="2.800" height="13" fill="#dcdcdc"/></svg>
<svg style="left:1202px;top:760px" width="14" height="14" viewBox="0 0 14 14"><path d="M1 0.500V13.500L13 7Z" fill="#dcdcdc"/></svg>
<svg style="left:1231px;top:760px" width="16" height="14" viewBox="0 0 16 14"><path d="M6 0.500V13.500L15.500 7Z" fill="#dcdcdc"/><rect x="1.200" y="0.500" width="2.800" height="13" fill="#dcdcdc"/></svg>
<svg style="left:1460px;top:760px" width="15" height="13" viewBox="0 0 15 13"><path d="M3 6.500H9.500A3 3 0 0 1 9.500 12.500H12" fill="none" stroke="#dcdcdc" stroke-width="0"/><path d="M4 5H10A2.800 2.800 0 0 1 12.800 7.800V8.500" fill="none" stroke="#dcdcdc" stroke-width="1.700"/><path d="M5.500 1.500L1 5L5.500 8.500Z" fill="#dcdcdc"/><rect x="1" y="10.500" width="13" height="1.800" fill="#dcdcdc"/></svg>
<div class="a" style="left:1494px;top:766px;width:24px;height:1px;background:#484848"></div>
<div class="a" style="left:1536px;top:766px;width:36px;height:1px;background:#484848"></div>
<div class="a" style="left:1521px;top:761px;width:12px;height:12px;border:2px solid #e0e0e0;border-radius:50%"></div>
<svg style="left:1590px;top:762px" width="18" height="10" viewBox="0 0 18 10"><path d="M0.500 9.500L5.500 3L8 6L11.500 0.500L17.500 9.500Z" fill="#dcdcdc"/></svg>
<div class="a" style="left:342px;top:786px;width:250px;height:34px;background:#323232"></div>
<svg style="left:351px;top:795px" width="15" height="16" viewBox="0 0 15 16"><path d="M7.500 0.500L14.500 4L7.500 7.500L0.500 4Z" fill="#dcdcdc"/><path d="M0.500 7.500L7.500 11L14.500 7.500M0.500 11L7.500 14.500L14.500 11" fill="none" stroke="#dcdcdc" stroke-width="1.600"/></svg>
<div class="a" style="left:490px;top:800px;width:5px;height:5px;border-radius:50%;background:#e8e8e8"></div>
<div class="a" style="left:511px;top:796px;width:8px;height:13px;border:2px solid #f0f0f0;border-radius:1px"></div>
<svg style="left:533px;top:796px" width="16" height="14" viewBox="0 0 16 14"><path d="M1 7Q8 -1 15 7Q8 15 1 7Z" fill="none" stroke="#dcdcdc" stroke-width="1.500"/><circle cx="8" cy="7" r="2.300" fill="#dcdcdc"/><path d="M2 1L14 13" stroke="#dcdcdc" stroke-width="1.600"/></svg>
<svg style="left:561px;top:796px" width="11" height="13" viewBox="0 0 11 13"><path d="M2.800 6V3.800A2.700 2.700 0 0 1 8.200 3.800V6" fill="none" stroke="#e0e0e0" stroke-width="1.600"/><rect x="0.500" y="5.500" width="10" height="7" rx="0.800" fill="#e0e0e0"/><rect x="4.700" y="7.500" width="1.600" height="3" fill="#2b2b2b"/></svg>
<div class="a" style="left:593px;top:786px;width:1025px;height:34px;background:#2d2d2d"></div>
<div class="a" style="left:593px;top:801px;width:1025px;height:1px;background:#272727"></div>
<svg style="left:0;top:0" width="1920" height="1080"><path d="M593.0 802V810M609.1 802V810M625.1 802V810M641.2 802V810M657.3 786V810M673.4 802V810M689.4 802V810M705.5 802V810M721.6 802V810M737.6 786V810M753.7 802V810M769.8 802V810M785.8 802V810M801.9 802V810M818.0 786V810M834.0 802V810M850.1 802V810M866.2 802V810M882.3 802V810M898.3 786V810M914.4 802V810M930.5 802V810M946.5 802V810M962.6 802V810M978.7 786V810M994.8 802V810M1010.8 802V810M1026.9 802V810M1043.0 802V810M1059.0 786V810M1075.1 802V810M1091.2 802V810M1107.2 802V810M1123.3 802V810M1139.4 786V810M1155.5 802V810M1171.5 802V810M1187.6 802V810M1203.7 802V810M1219.7 786V810M1235.8 802V810M1251.9 802V810M1267.9 802V810M1284.0 802V810M1300.1 786V810M1316.2 802V810M1332.2 802V810M1348.3 802V810M1364.4 802V810M1380.4 786V810M1396.5 802V810M1412.6 802V810M1428.6 802V810M1444.7 802V810M1460.8 786V810M1476.8 802V810M1492.9 802V810M1509.0 802V810M1525.1 802V810M1541.1 786V810M1557.2 802V810M1573.3 802V810M1589.3 802V810M1605.4 802V810" stroke="#444" stroke-width="1" fill="none"/></svg>
<div class="t" style="left:659.3px;top:806px;font-size:9.500px;color:#9a9a9a;letter-spacing:0">5</div>
<div class="t" style="left:739.6px;top:806px;font-size:9.500px;color:#9a9a9a;letter-spacing:0">10</div>
<div class="t" style="left:820.0px;top:806px;font-size:9.500px;color:#9a9a9a;letter-spacing:0">15</div>
<div class="t" style="left:900.3px;top:806px;font-size:9.500px;color:#9a9a9a;letter-spacing:0">20</div>
<div class="t" style="left:980.7px;top:806px;font-size:9.500px;color:#9a9a9a;letter-spacing:0">25</div>
<div class="t" style="left:1061.0px;top:806px;font-size:9.500px;color:#9a9a9a;letter-spacing:0">30</div>
<div class="t" style="left:1141.4px;top:806px;font-size:9.500px;color:#9a9a9a;letter-spacing:0">35</div>
<div class="t" style="left:1221.7px;top:806px;font-size:9.500px;color:#9a9a9a;letter-spacing:0">40</div>
<div class="t" style="left:1302.1px;top:806px;font-size:9.500px;color:#9a9a9a;letter-spacing:0">45</div>
<div class="t" style="left:1382.4px;top:806px;font-size:9.500px;color:#9a9a9a;letter-spacing:0">50</div>
<div class="t" style="left:1462.8px;top:806px;font-size:9.500px;color:#9a9a9a;letter-spacing:0">55</div>
<div class="t" style="left:1543.1px;top:806px;font-size:9.500px;color:#9a9a9a;letter-spacing:0">60</div>
<div class="t" style="left:1062.0px;top:787px;font-size:10px;color:#9a9a9a;font-style:italic;letter-spacing:0">1s</div>
<div class="t" style="left:1544.1px;top:787px;font-size:10px;color:#9a9a9a;font-style:italic;letter-spacing:0">2s</div>
<div class="a" style="left:342px;top:820px;width:250px;height:239.3px;background:#2d2d2d"></div>
<div class="a" style="left:593px;top:820px;width:1017px;height:238.3px;background:#8f8f8f"></div>
<div class="a" style="left:342px;top:820.3px;width:250px;height:19.1px;background:#33619a"></div>
<div class="a" style="left:342px;top:839.2px;width:250px;height:1px;background:#222"></div>
<div class="a" style="left:593px;top:839.2px;width:1017px;height:1.300px;background:#2c2c2c"></div>
<svg style="left:370px;top:822px" width="12" height="12" viewBox="0 0 12 12"><path d="M1 1H11V11H4L1 8Z" fill="#8a8a8a" stroke="#cfcfcf" stroke-width="1.200"/><path d="M1 8H4V11" fill="none" stroke="#cfcfcf" stroke-width="1"/></svg>
<div class="t" style="left:393px;top:824.3px;font-size:10.300px;letter-spacing:-0.150px;color:#d6d6d6">R_B_Eyebrow</div>
<div class="a" style="left:513px;top:823.8px;width:6.500px;height:12.500px;border-radius:1.500px;background:#ff0000"></div>
<div class="a" style="left:593.0px;top:820.3px;width:96.4px;height:18.9px;background:#7d5aa6"></div>
<div class="a" style="left:706.0px;top:820.3px;width:95.9px;height:18.9px;background:#7d5aa6"></div>
<div class="a" style="left:704.5px;top:820.3px;width:1.500px;height:18.9px;background:#2c2c2c"></div>
<div class="a" style="left:342px;top:859.0px;width:250px;height:1px;background:#222"></div>
<div class="a" style="left:593px;top:859.0px;width:1017px;height:1.300px;background:#2c2c2c"></div>
<svg style="left:370px;top:842px" width="12" height="12" viewBox="0 0 12 12"><path d="M1 1H11V11H4L1 8Z" fill="#8a8a8a" stroke="#cfcfcf" stroke-width="1.200"/><path d="M1 8H4V11" fill="none" stroke="#cfcfcf" stroke-width="1"/></svg>
<div class="t" style="left:393px;top:844.2px;font-size:10.300px;letter-spacing:-0.150px;color:#d6d6d6">R_F_Eyebrow</div>
<div class="a" style="left:513px;top:843.7px;width:6.500px;height:12.500px;border-radius:1.500px;background:#6fa500"></div>
<div class="a" style="left:593.0px;top:840.2px;width:96.4px;height:18.9px;background:#7d5aa6"></div>
<div class="a" style="left:706.0px;top:840.2px;width:95.9px;height:18.9px;background:#7d5aa6"></div>
<div class="a" style="left:704.5px;top:840.2px;width:1.500px;height:18.9px;background:#2c2c2c"></div>
<div class="a" style="left:342px;top:878.9px;width:250px;height:1px;background:#222"></div>
<div class="a" style="left:593px;top:878.9px;width:1017px;height:1.300px;background:#2c2c2c"></div>
<svg style="left:370px;top:862px" width="12" height="12" viewBox="0 0 12 12"><path d="M1 1H11V11H4L1 8Z" fill="#8a8a8a" stroke="#cfcfcf" stroke-width="1.200"/><path d="M1 8H4V11" fill="none" stroke="#cfcfcf" stroke-width="1"/></svg>
<div class="t" style="left:393px;top:864.0px;font-size:10.300px;letter-spacing:-0.150px;color:#d6d6d6">R_F_Eyeliser_an...</div>
<div class="a" style="left:513px;top:863.5px;width:6.500px;height:12.500px;border-radius:1.500px;background:#9a33e0"></div>
<svg style="left:562px;top:862px" width="10" height="12" viewBox="0 0 10 12"><path d="M2.500 5.500V3.500A2.500 2.500 0 0 1 7.500 3.500V5.500" fill="none" stroke="#d8d8d8" stroke-width="1.500"/><rect x="0.500" y="5" width="9" height="6.500" rx="0.800" fill="#d8d8d8"/><rect x="4.200" y="7" width="1.600" height="2.600" fill="#2b2b2b"/></svg>
<div class="a" style="left:342px;top:898.7px;width:250px;height:1px;background:#222"></div>
<div class="a" style="left:593px;top:898.7px;width:1017px;height:1.300px;background:#2c2c2c"></div>
<svg style="left:370px;top:882px" width="12" height="12" viewBox="0 0 12 12"><path d="M1 1H11V11H4L1 8Z" fill="#8a8a8a" stroke="#cfcfcf" stroke-width="1.200"/><path d="M1 8H4V11" fill="none" stroke="#cfcfcf" stroke-width="1"/></svg>
<div class="t" style="left:393px;top:883.9px;font-size:10.300px;letter-spacing:-0.150px;color:#d6d6d6">R_B_Eyeliser_an...</div>
<div class="a" style="left:513px;top:883.4px;width:6.500px;height:12.500px;border-radius:1.500px;background:#ff8a1a"></div>
<svg style="left:562px;top:882px" width="10" height="12" viewBox="0 0 10 12"><path d="M2.500 5.500V3.500A2.500 2.500 0 0 1 7.500 3.500V5.500" fill="none" stroke="#d8d8d8" stroke-width="1.500"/><rect x="0.500" y="5" width="9" height="6.500" rx="0.800" fill="#d8d8d8"/><rect x="4.200" y="7" width="1.600" height="2.600" fill="#2b2b2b"/></svg>
<div class="a" style="left:342px;top:918.6px;width:250px;height:1px;background:#222"></div>
<div class="a" style="left:593px;top:918.6px;width:1017px;height:1.300px;background:#2c2c2c"></div>
<svg style="left:370px;top:903px" width="12" height="10" viewBox="0 0 12 10"><rect x="0.600" y="0.600" width="10.800" height="8.800" fill="#4a4a4a" stroke="#bdbdbd" stroke-width="1.200"/><rect x="4" y="3" width="4" height="4" fill="#e0e0e0"/></svg>
<div class="t" style="left:393px;top:903.7px;font-size:10.300px;letter-spacing:-0.150px;color:#d6d6d6">Mask</div>
<div class="a" style="left:513px;top:903.2px;width:6.500px;height:12.500px;border-radius:1.500px;background:#ff0000"></div>
<svg style="left:534px;top:903px" width="14" height="12" viewBox="0 0 14 12"><path d="M1 6Q7 -1 13 6Q7 13 1 6Z" fill="none" stroke="#d0d0d0" stroke-width="1.300"/><circle cx="7" cy="6" r="2" fill="#d0d0d0"/><path d="M2 1L12 11" stroke="#d0d0d0" stroke-width="1.400"/></svg>
<svg style="left:562px;top:902px" width="10" height="12" viewBox="0 0 10 12"><path d="M2.500 5.500V3.500A2.500 2.500 0 0 1 7.500 3.500V5.500" fill="none" stroke="#d8d8d8" stroke-width="1.500"/><rect x="0.500" y="5" width="9" height="6.500" rx="0.800" fill="#d8d8d8"/><rect x="4.200" y="7" width="1.600" height="2.600" fill="#2b2b2b"/></svg>
<div class="a" style="left:342px;top:938.5px;width:250px;height:1px;background:#222"></div>
<div class="a" style="left:593px;top:938.5px;width:1017px;height:1.300px;background:#2c2c2c"></div>
<svg style="left:388px;top:922px" width="12" height="12" viewBox="0 0 12 12"><path d="M1 1H11V11H4L1 8Z" fill="#4a4a4a" stroke="#bdbdbd" stroke-width="1.200"/><rect x="4" y="3.500" width="4" height="4" fill="#e0e0e0"/></svg>
<div class="t" style="left:411px;top:923.6px;font-size:10.300px;letter-spacing:-0.150px;color:#d6d6d6">R_Eyeball</div>
<div class="a" style="left:513px;top:923.1px;width:6.500px;height:12.500px;border-radius:1.500px;background:#1aa6a6"></div>
<div class="a" style="left:342px;top:958.3px;width:250px;height:1px;background:#222"></div>
<div class="a" style="left:593px;top:958.3px;width:1017px;height:1.300px;background:#2c2c2c"></div>
<svg style="left:370px;top:942px" width="12" height="10" viewBox="0 0 12 10"><rect x="0.600" y="0.600" width="10.800" height="8.800" fill="#4a4a4a" stroke="#bdbdbd" stroke-width="1.200"/><rect x="4" y="3" width="4" height="4" fill="#e0e0e0"/></svg>
<div class="t" style="left:393px;top:943.5px;font-size:10.300px;letter-spacing:-0.150px;color:#d6d6d6">Mask</div>
<div class="a" style="left:513px;top:943.0px;width:6.500px;height:12.500px;border-radius:1.500px;background:#6fa500"></div>
<svg style="left:534px;top:942px" width="14" height="12" viewBox="0 0 14 12"><path d="M1 6Q7 -1 13 6Q7 13 1 6Z" fill="none" stroke="#d0d0d0" stroke-width="1.300"/><circle cx="7" cy="6" r="2" fill="#d0d0d0"/><path d="M2 1L12 11" stroke="#d0d0d0" stroke-width="1.400"/></svg>
<svg style="left:562px;top:941px" width="10" height="12" viewBox="0 0 10 12"><path d="M2.500 5.500V3.500A2.500 2.500 0 0 1 7.500 3.500V5.500" fill="none" stroke="#d8d8d8" stroke-width="1.500"/><rect x="0.500" y="5" width="9" height="6.500" rx="0.800" fill="#d8d8d8"/><rect x="4.200" y="7" width="1.600" height="2.600" fill="#2b2b2b"/></svg>
<div class="a" style="left:342px;top:978.2px;width:250px;height:1px;background:#222"></div>
<div class="a" style="left:593px;top:978.2px;width:1017px;height:1.300px;background:#2c2c2c"></div>
<svg style="left:388px;top:961px" width="12" height="12" viewBox="0 0 12 12"><path d="M1 1H11V11H4L1 8Z" fill="#4a4a4a" stroke="#bdbdbd" stroke-width="1.200"/><rect x="4" y="3.500" width="4" height="4" fill="#e0e0e0"/></svg>
<div class="t" style="left:411px;top:963.3px;font-size:10.300px;letter-spacing:-0.150px;color:#d6d6d6">R_Eyeball</div>
<div class="a" style="left:513px;top:962.8px;width:6.500px;height:12.500px;border-radius:1.500px;background:#ff4fff"></div>
<div class="a" style="left:342px;top:998.0px;width:250px;height:1px;background:#222"></div>
<div class="a" style="left:593px;top:998.0px;width:1017px;height:1.300px;background:#2c2c2c"></div>
<svg style="left:370px;top:981px" width="12" height="12" viewBox="0 0 12 12"><path d="M1 1H11V11H4L1 8Z" fill="#8a8a8a" stroke="#cfcfcf" stroke-width="1.200"/><path d="M1 8H4V11" fill="none" stroke="#cfcfcf" stroke-width="1"/></svg>
<div class="t" style="left:393px;top:983.2px;font-size:10.300px;letter-spacing:-0.150px;color:#d6d6d6">R_F_Line</div>
<div class="a" style="left:513px;top:982.7px;width:6.500px;height:12.500px;border-radius:1.500px;background:#00f0ff"></div>
<div class="a" style="left:593.0px;top:979.2px;width:96.4px;height:18.9px;background:#7d5aa6"></div>
<div class="a" style="left:706.0px;top:979.2px;width:95.9px;height:18.9px;background:#7d5aa6"></div>
<div class="a" style="left:704.5px;top:979.2px;width:1.500px;height:18.9px;background:#2c2c2c"></div>
<div class="a" style="left:342px;top:1017.9px;width:250px;height:1px;background:#222"></div>
<div class="a" style="left:593px;top:1017.9px;width:1017px;height:1.300px;background:#2c2c2c"></div>
<svg style="left:370px;top:1001px" width="12" height="12" viewBox="0 0 12 12"><path d="M1 1H11V11H4L1 8Z" fill="#8a8a8a" stroke="#cfcfcf" stroke-width="1.200"/><path d="M1 8H4V11" fill="none" stroke="#cfcfcf" stroke-width="1"/></svg>
<div class="t" style="left:393px;top:1003.0px;font-size:10.300px;letter-spacing:-0.150px;color:#d6d6d6">R_B_Line</div>
<div class="a" style="left:513px;top:1002.5px;width:6.500px;height:12.500px;border-radius:1.500px;background:#ff5050"></div>
<div class="a" style="left:593.0px;top:999.0px;width:96.4px;height:18.9px;background:#7d5aa6"></div>
<div class="a" style="left:706.0px;top:999.0px;width:95.9px;height:18.9px;background:#7d5aa6"></div>
<div class="a" style="left:704.5px;top:999.0px;width:1.500px;height:18.9px;background:#2c2c2c"></div>
<div class="a" style="left:342px;top:1037.8px;width:250px;height:1px;background:#222"></div>
<div class="a" style="left:593px;top:1037.8px;width:1017px;height:1.300px;background:#2c2c2c"></div>
<svg style="left:370px;top:1021px" width="12" height="12" viewBox="0 0 12 12"><path d="M1 1H11V11H4L1 8Z" fill="#8a8a8a" stroke="#cfcfcf" stroke-width="1.200"/><path d="M1 8H4V11" fill="none" stroke="#cfcfcf" stroke-width="1"/></svg>
<div class="t" style="left:393px;top:1022.9px;font-size:10.300px;letter-spacing:-0.150px;color:#d6d6d6">WE</div>
<div class="a" style="left:513px;top:1022.4px;width:6.500px;height:12.500px;border-radius:1.500px;background:#9a33e0"></div>
<svg style="left:562px;top:1021px" width="10" height="12" viewBox="0 0 10 12"><path d="M2.500 5.500V3.500A2.500 2.500 0 0 1 7.500 3.500V5.500" fill="none" stroke="#d8d8d8" stroke-width="1.500"/><rect x="0.500" y="5" width="9" height="6.500" rx="0.800" fill="#d8d8d8"/><rect x="4.200" y="7" width="1.600" height="2.600" fill="#2b2b2b"/></svg>
<div class="a" style="left:342px;top:1057.6px;width:250px;height:1px;background:#222"></div>
<div class="a" style="left:593px;top:1057.6px;width:1017px;height:1.300px;background:#2c2c2c"></div>
<svg style="left:370px;top:1041px" width="12" height="12" viewBox="0 0 12 12"><path d="M1 1H11V11H4L1 8Z" fill="#8a8a8a" stroke="#cfcfcf" stroke-width="1.200"/><path d="M1 8H4V11" fill="none" stroke="#cfcfcf" stroke-width="1"/></svg>
<div class="t" style="left:393px;top:1042.8px;font-size:10.300px;letter-spacing:-0.150px;color:#d6d6d6">WE</div>
<div class="a" style="left:513px;top:1042.3px;width:6.500px;height:12.500px;border-radius:1.500px;background:#ff8a1a"></div>
<svg style="left:562px;top:1041px" width="10" height="12" viewBox="0 0 10 12"><path d="M2.500 5.500V3.500A2.500 2.500 0 0 1 7.500 3.500V5.500" fill="none" stroke="#d8d8d8" stroke-width="1.500"/><rect x="0.500" y="5" width="9" height="6.500" rx="0.800" fill="#d8d8d8"/><rect x="4.200" y="7" width="1.600" height="2.600" fill="#2b2b2b"/></svg>
<svg style="left:0;top:0" width="1920" height="1080"><path d="M609.1 821.3v1.500M625.1 821.3v1.500M641.2 821.3v1.500M657.3 821.3v1.500M673.4 821.3v1.500M689.4 821.3v1.500M705.5 821.3v1.500M721.6 821.3v1.500M737.6 821.3v1.500M753.7 821.3v1.500M769.8 821.3v1.500M785.8 821.3v1.500M801.9 821.3v1.500M818.0 821.3v1.500M834.0 821.3v1.500M850.1 821.3v1.500M866.2 821.3v1.500M882.3 821.3v1.500M898.3 821.3v1.500M914.4 821.3v1.500M930.5 821.3v1.500M946.5 821.3v1.500M962.6 821.3v1.500M978.7 821.3v1.500M994.8 821.3v1.500M1010.8 821.3v1.500M1026.9 821.3v1.500M1043.0 821.3v1.500M1059.0 821.3v1.500M1075.1 821.3v1.500M1091.2 821.3v1.500M1107.2 821.3v1.500M1123.3 821.3v1.500M1139.4 821.3v1.500M1155.5 821.3v1.500M1171.5 821.3v1.500M1187.6 821.3v1.500M1203.7 821.3v1.500M1219.7 821.3v1.500M1235.8 821.3v1.500M1251.9 821.3v1.500M1267.9 821.3v1.500M1284.0 821.3v1.500M1300.1 821.3v1.500M1316.2 821.3v1.500M1332.2 821.3v1.500M1348.3 821.3v1.500M1364.4 821.3v1.500M1380.4 821.3v1.500M1396.5 821.3v1.500M1412.6 821.3v1.500M1428.6 821.3v1.500M1444.7 821.3v1.500M1460.8 821.3v1.500M1476.8 821.3v1.500M1492.9 821.3v1.500M1509.0 821.3v1.500M1525.1 821.3v1.500M1541.1 821.3v1.500M1557.2 821.3v1.500M1573.3 821.3v1.500M1589.3 821.3v1.500M1605.4 821.3v1.500M609.1 841.2v1.500M625.1 841.2v1.500M641.2 841.2v1.500M657.3 841.2v1.500M673.4 841.2v1.500M689.4 841.2v1.500M705.5 841.2v1.500M721.6 841.2v1.500M737.6 841.2v1.500M753.7 841.2v1.500M769.8 841.2v1.500M785.8 841.2v1.500M801.9 841.2v1.500M818.0 841.2v1.500M834.0 841.2v1.500M850.1 841.2v1.500M866.2 841.2v1.500M882.3 841.2v1.500M898.3 841.2v1.500M914.4 841.2v1.500M930.5 841.2v1.500M946.5 841.2v1.500M962.6 841.2v1.500M978.7 841.2v1.500M994.8 841.2v1.500M1010.8 841.2v1.500M1026.9 841.2v1.500M1043.0 841.2v1.500M1059.0 841.2v1.500M1075.1 841.2v1.500M1091.2 841.2v1.500M1107.2 841.2v1.500M1123.3 841.2v1.500M1139.4 841.2v1.500M1155.5 841.2v1.500M1171.5 841.2v1.500M1187.6 841.2v1.500M1203.7 841.2v1.500M1219.7 841.2v1.500M1235.8 841.2v1.500M1251.9 841.2v1.500M1267.9 841.2v1.500M1284.0 841.2v1.500M1300.1 841.2v1.500M1316.2 841.2v1.500M1332.2 841.2v1.500M1348.3 841.2v1.500M1364.4 841.2v1.500M1380.4 841.2v1.500M1396.5 841.2v1.500M1412.6 841.2v1.500M1428.6 841.2v1.500M1444.7 841.2v1.500M1460.8 841.2v1.500M1476.8 841.2v1.500M1492.9 841.2v1.500M1509.0 841.2v1.500M1525.1 841.2v1.500M1541.1 841.2v1.500M1557.2 841.2v1.500M1573.3 841.2v1.500M1589.3 841.2v1.500M1605.4 841.2v1.500M609.1 861.0v1.500M625.1 861.0v1.500M641.2 861.0v1.500M657.3 861.0v1.500M673.4 861.0v1.500M689.4 861.0v1.500M705.5 861.0v1.500M721.6 861.0v1.500M737.6 861.0v1.500M753.7 861.0v1.500M769.8 861.0v1.500M785.8 861.0v1.500M801.9 861.0v1.500M818.0 861.0v1.500M834.0 861.0v1.500M850.1 861.0v1.500M866.2 861.0v1.500M882.3 861.0v1.500M898.3 861.0v1.500M914.4 861.0v1.500M930.5 861.0v1.500M946.5 861.0v1.500M962.6 861.0v1.500M978.7 861.0v1.500M994.8 861.0v1.500M1010.8 861.0v1.500M1026.9 861.0v1.500M1043.0 861.0v1.500M1059.0 861.0v1.500M1075.1 861.0v1.500M1091.2 861.0v1.500M1107.2 861.0v1.500M1123.3 861.0v1.500M1139.4 861.0v1.500M1155.5 861.0v1.500M1171.5 861.0v1.500M1187.6 861.0v1.500M1203.7 861.0v1.500M1219.7 861.0v1.500M1235.8 861.0v1.500M1251.9 861.0v1.500M1267.9 861.0v1.500M1284.0 861.0v1.500M1300.1 861.0v1.500M1316.2 861.0v1.500M1332.2 861.0v1.500M1348.3 861.0v1.500M1364.4 861.0v1.500M1380.4 861.0v1.500M1396.5 861.0v1.500M1412.6 861.0v1.500M1428.6 861.0v1.500M1444.7 861.0v1.500M1460.8 861.0v1.500M1476.8 861.0v1.500M1492.9 861.0v1.500M1509.0 861.0v1.500M1525.1 861.0v1.500M1541.1 861.0v1.500M1557.2 861.0v1.500M1573.3 861.0v1.500M1589.3 861.0v1.500M1605.4 861.0v1.500M609.1 880.9v1.500M625.1 880.9v1.500M641.2 880.9v1.500M657.3 880.9v1.500M673.4 880.9v1.500M689.4 880.9v1.500M705.5 880.9v1.500M721.6 880.9v1.500M737.6 880.9v1.500M753.7 880.9v1.500M769.8 880.9v1.500M785.8 880.9v1.500M801.9 880.9v1.500M818.0 880.9v1.500M834.0 880.9v1.500M850.1 880.9v1.500M866.2 880.9v1.500M882.3 880.9v1.500M898.3 880.9v1.500M914.4 880.9v1.500M930.5 880.9v1.500M946.5 880.9v1.500M962.6 880.9v1.500M978.7 880.9v1.500M994.8 880.9v1.500M1010.8 880.9v1.500M1026.9 880.9v1.500M1043.0 880.9v1.500M1059.0 880.9v1.500M1075.1 880.9v1.500M1091.2 880.9v1.500M1107.2 880.9v1.500M1123.3 880.9v1.500M1139.4 880.9v1.500M1155.5 880.9v1.500M1171.5 880.9v1.500M1187.6 880.9v1.500M1203.7 880.9v1.500M1219.7 880.9v1.500M1235.8 880.9v1.500M1251.9 880.9v1.500M1267.9 880.9v1.500M1284.0 880.9v1.500M1300.1 880.9v1.500M1316.2 880.9v1.500M1332.2 880.9v1.500M1348.3 880.9v1.500M1364.4 880.9v1.500M1380.4 880.9v1.500M1396.5 880.9v1.500M1412.6 880.9v1.500M1428.6 880.9v1.500M1444.7 880.9v1.500M1460.8 880.9v1.500M1476.8 880.9v1.500M1492.9 880.9v1.500M1509.0 880.9v1.500M1525.1 880.9v1.500M1541.1 880.9v1.500M1557.2 880.9v1.500M1573.3 880.9v1.500M1589.3 880.9v1.500M1605.4 880.9v1.500M609.1 900.7v1.500M625.1 900.7v1.500M641.2 900.7v1.500M657.3 900.7v1.500M673.4 900.7v1.500M689.4 900.7v1.500M705.5 900.7v1.500M721.6 900.7v1.500M737.6 900.7v1.500M753.7 900.7v1.500M769.8 900.7v1.500M785.8 900.7v1.500M801.9 900.7v1.500M818.0 900.7v1.500M834.0 900.7v1.500M850.1 900.7v1.500M866.2 900.7v1.500M882.3 900.7v1.500M898.3 900.7v1.500M914.4 900.7v1.500M930.5 900.7v1.500M946.5 900.7v1.500M962.6 900.7v1.500M978.7 900.7v1.500M994.8 900.7v1.500M1010.8 900.7v1.500M1026.9 900.7v1.500M1043.0 900.7v1.500M1059.0 900.7v1.500M1075.1 900.7v1.500M1091.2 900.7v1.500M1107.2 900.7v1.500M1123.3 900.7v1.500M1139.4 900.7v1.500M1155.5 900.7v1.500M1171.5 900.7v1.500M1187.6 900.7v1.500M1203.7 900.7v1.500M1219.7 900.7v1.500M1235.8 900.7v1.500M1251.9 900.7v1.500M1267.9 900.7v1.500M1284.0 900.7v1.500M1300.1 900.7v1.500M1316.2 900.7v1.500M1332.2 900.7v1.500M1348.3 900.7v1.500M1364.4 900.7v1.500M1380.4 900.7v1.500M1396.5 900.7v1.500M1412.6 900.7v1.500M1428.6 900.7v1.500M1444.7 900.7v1.500M1460.8 900.7v1.500M1476.8 900.7v1.500M1492.9 900.7v1.500M1509.0 900.7v1.500M1525.1 900.7v1.500M1541.1 900.7v1.500M1557.2 900.7v1.500M1573.3 900.7v1.500M1589.3 900.7v1.500M1605.4 900.7v1.500M609.1 920.6v1.500M625.1 920.6v1.500M641.2 920.6v1.500M657.3 920.6v1.500M673.4 920.6v1.500M689.4 920.6v1.500M705.5 920.6v1.500M721.6 920.6v1.500M737.6 920.6v1.500M753.7 920.6v1.500M769.8 920.6v1.500M785.8 920.6v1.500M801.9 920.6v1.500M818.0 920.6v1.500M834.0 920.6v1.500M850.1 920.6v1.500M866.2 920.6v1.500M882.3 920.6v1.500M898.3 920.6v1.500M914.4 920.6v1.500M930.5 920.6v1.500M946.5 920.6v1.500M962.6 920.6v1.500M978.7 920.6v1.500M994.8 920.6v1.500M1010.8 920.6v1.500M1026.9 920.6v1.500M1043.0 920.6v1.500M1059.0 920.6v1.500M1075.1 920.6v1.500M1091.2 920.6v1.500M1107.2 920.6v1.500M1123.3 920.6v1.500M1139.4 920.6v1.500M1155.5 920.6v1.500M1171.5 920.6v1.500M1187.6 920.6v1.500M1203.7 920.6v1.500M1219.7 920.6v1.500M1235.8 920.6v1.500M1251.9 920.6v1.500M1267.9 920.6v1.500M1284.0 920.6v1.500M1300.1 920.6v1.500M1316.2 920.6v1.500M1332.2 920.6v1.500M1348.3 920.6v1.500M1364.4 920.6v1.500M1380.4 920.6v1.500M1396.5 920.6v1.500M1412.6 920.6v1.500M1428.6 920.6v1.500M1444.7 920.6v1.500M1460.8 920.6v1.500M1476.8 920.6v1.500M1492.9 920.6v1.500M1509.0 920.6v1.500M1525.1 920.6v1.500M1541.1 920.6v1.500M1557.2 920.6v1.500M1573.3 920.6v1.500M1589.3 920.6v1.500M1605.4 920.6v1.500M609.1 940.5v1.500M625.1 940.5v1.500M641.2 940.5v1.500M657.3 940.5v1.500M673.4 940.5v1.500M689.4 940.5v1.500M705.5 940.5v1.500M721.6 940.5v1.500M737.6 940.5v1.500M753.7 940.5v1.500M769.8 940.5v1.500M785.8 940.5v1.500M801.9 940.5v1.500M818.0 940.5v1.500M834.0 940.5v1.500M850.1 940.5v1.500M866.2 940.5v1.500M882.3 940.5v1.500M898.3 940.5v1.500M914.4 940.5v1.500M930.5 940.5v1.500M946.5 940.5v1.500M962.6 940.5v1.500M978.7 940.5v1.500M994.8 940.5v1.500M1010.8 940.5v1.500M1026.9 940.5v1.500M1043.0 940.5v1.500M1059.0 940.5v1.500M1075.1 940.5v1.500M1091.2 940.5v1.500M1107.2 940.5v1.500M1123.3 940.5v1.500M1139.4 940.5v1.500M1155.5 940.5v1.500M1171.5 940.5v1.500M1187.6 940.5v1.500M1203.7 940.5v1.500M1219.7 940.5v1.500M1235.8 940.5v1.500M1251.9 940.5v1.500M1267.9 940.5v1.500M1284.0 940.5v1.500M1300.1 940.5v1.500M1316.2 940.5v1.500M1332.2 940.5v1.500M1348.3 940.5v1.500M1364.4 940.5v1.500M1380.4 940.5v1.500M1396.5 940.5v1.500M1412.6 940.5v1.500M1428.6 940.5v1.500M1444.7 940.5v1.500M1460.8 940.5v1.500M1476.8 940.5v1.500M1492.9 940.5v1.500M1509.0 940.5v1.500M1525.1 940.5v1.500M1541.1 940.5v1.500M1557.2 940.5v1.500M1573.3 940.5v1.500M1589.3 940.5v1.500M1605.4 940.5v1.500M609.1 960.3v1.500M625.1 960.3v1.500M641.2 960.3v1.500M657.3 960.3v1.500M673.4 960.3v1.500M689.4 960.3v1.500M705.5 960.3v1.500M721.6 960.3v1.500M737.6 960.3v1.500M753.7 960.3v1.500M769.8 960.3v1.500M785.8 960.3v1.500M801.9 960.3v1.500M818.0 960.3v1.500M834.0 960.3v1.500M850.1 960.3v1.500M866.2 960.3v1.500M882.3 960.3v1.500M898.3 960.3v1.500M914.4 960.3v1.500M930.5 960.3v1.500M946.5 960.3v1.500M962.6 960.3v1.500M978.7 960.3v1.500M994.8 960.3v1.500M1010.8 960.3v1.500M1026.9 960.3v1.500M1043.0 960.3v1.500M1059.0 960.3v1.500M1075.1 960.3v1.500M1091.2 960.3v1.500M1107.2 960.3v1.500M1123.3 960.3v1.500M1139.4 960.3v1.500M1155.5 960.3v1.500M1171.5 960.3v1.500M1187.6 960.3v1.500M1203.7 960.3v1.500M1219.7 960.3v1.500M1235.8 960.3v1.500M1251.9 960.3v1.500M1267.9 960.3v1.500M1284.0 960.3v1.500M1300.1 960.3v1.500M1316.2 960.3v1.500M1332.2 960.3v1.500M1348.3 960.3v1.500M1364.4 960.3v1.500M1380.4 960.3v1.500M1396.5 960.3v1.500M1412.6 960.3v1.500M1428.6 960.3v1.500M1444.7 960.3v1.500M1460.8 960.3v1.500M1476.8 960.3v1.500M1492.9 960.3v1.500M1509.0 960.3v1.500M1525.1 960.3v1.500M1541.1 960.3v1.500M1557.2 960.3v1.500M1573.3 960.3v1.500M1589.3 960.3v1.500M1605.4 960.3v1.500M609.1 980.2v1.500M625.1 980.2v1.500M641.2 980.2v1.500M657.3 980.2v1.500M673.4 980.2v1.500M689.4 980.2v1.500M705.5 980.2v1.500M721.6 980.2v1.500M737.6 980.2v1.500M753.7 980.2v1.500M769.8 980.2v1.500M785.8 980.2v1.500M801.9 980.2v1.500M818.0 980.2v1.500M834.0 980.2v1.500M850.1 980.2v1.500M866.2 980.2v1.500M882.3 980.2v1.500M898.3 980.2v1.500M914.4 980.2v1.500M930.5 980.2v1.500M946.5 980.2v1.500M962.6 980.2v1.500M978.7 980.2v1.500M994.8 980.2v1.500M1010.8 980.2v1.500M1026.9 980.2v1.500M1043.0 980.2v1.500M1059.0 980.2v1.500M1075.1 980.2v1.500M1091.2 980.2v1.500M1107.2 980.2v1.500M1123.3 980.2v1.500M1139.4 980.2v1.500M1155.5 980.2v1.500M1171.5 980.2v1.500M1187.6 980.2v1.500M1203.7 980.2v1.500M1219.7 980.2v1.500M1235.8 980.2v1.500M1251.9 980.2v1.500M1267.9 980.2v1.500M1284.0 980.2v1.500M1300.1 980.2v1.500M1316.2 980.2v1.500M1332.2 980.2v1.500M1348.3 980.2v1.500M1364.4 980.2v1.500M1380.4 980.2v1.500M1396.5 980.2v1.500M1412.6 980.2v1.500M1428.6 980.2v1.500M1444.7 980.2v1.500M1460.8 980.2v1.500M1476.8 980.2v1.500M1492.9 980.2v1.500M1509.0 980.2v1.500M1525.1 980.2v1.500M1541.1 980.2v1.500M1557.2 980.2v1.500M1573.3 980.2v1.500M1589.3 980.2v1.500M1605.4 980.2v1.500M609.1 1000.0v1.500M625.1 1000.0v1.500M641.2 1000.0v1.500M657.3 1000.0v1.500M673.4 1000.0v1.500M689.4 1000.0v1.500M705.5 1000.0v1.500M721.6 1000.0v1.500M737.6 1000.0v1.500M753.7 1000.0v1.500M769.8 1000.0v1.500M785.8 1000.0v1.500M801.9 1000.0v1.500M818.0 1000.0v1.500M834.0 1000.0v1.500M850.1 1000.0v1.500M866.2 1000.0v1.500M882.3 1000.0v1.500M898.3 1000.0v1.500M914.4 1000.0v1.500M930.5 1000.0v1.500M946.5 1000.0v1.500M962.6 1000.0v1.500M978.7 1000.0v1.500M994.8 1000.0v1.500M1010.8 1000.0v1.500M1026.9 1000.0v1.500M1043.0 1000.0v1.500M1059.0 1000.0v1.500M1075.1 1000.0v1.500M1091.2 1000.0v1.500M1107.2 1000.0v1.500M1123.3 1000.0v1.500M1139.4 1000.0v1.500M1155.5 1000.0v1.500M1171.5 1000.0v1.500M1187.6 1000.0v1.500M1203.7 1000.0v1.500M1219.7 1000.0v1.500M1235.8 1000.0v1.500M1251.9 1000.0v1.500M1267.9 1000.0v1.500M1284.0 1000.0v1.500M1300.1 1000.0v1.500M1316.2 1000.0v1.500M1332.2 1000.0v1.500M1348.3 1000.0v1.500M1364.4 1000.0v1.500M1380.4 1000.0v1.500M1396.5 1000.0v1.500M1412.6 1000.0v1.500M1428.6 1000.0v1.500M1444.7 1000.0v1.500M1460.8 1000.0v1.500M1476.8 1000.0v1.500M1492.9 1000.0v1.500M1509.0 1000.0v1.500M1525.1 1000.0v1.500M1541.1 1000.0v1.500M1557.2 1000.0v1.500M1573.3 1000.0v1.500M1589.3 1000.0v1.500M1605.4 1000.0v1.500M609.1 1019.9v1.500M625.1 1019.9v1.500M641.2 1019.9v1.500M657.3 1019.9v1.500M673.4 1019.9v1.500M689.4 1019.9v1.500M705.5 1019.9v1.500M721.6 1019.9v1.500M737.6 1019.9v1.500M753.7 1019.9v1.500M769.8 1019.9v1.500M785.8 1019.9v1.500M801.9 1019.9v1.500M818.0 1019.9v1.500M834.0 1019.9v1.500M850.1 1019.9v1.500M866.2 1019.9v1.500M882.3 1019.9v1.500M898.3 1019.9v1.500M914.4 1019.9v1.500M930.5 1019.9v1.500M946.5 1019.9v1.500M962.6 1019.9v1.500M978.7 1019.9v1.500M994.8 1019.9v1.500M1010.8 1019.9v1.500M1026.9 1019.9v1.500M1043.0 1019.9v1.500M1059.0 1019.9v1.500M1075.1 1019.9v1.500M1091.2 1019.9v1.500M1107.2 1019.9v1.500M1123.3 1019.9v1.500M1139.4 1019.9v1.500M1155.5 1019.9v1.500M1171.5 1019.9v1.500M1187.6 1019.9v1.500M1203.7 1019.9v1.500M1219.7 1019.9v1.500M1235.8 1019.9v1.500M1251.9 1019.9v1.500M1267.9 1019.9v1.500M1284.0 1019.9v1.500M1300.1 1019.9v1.500M1316.2 1019.9v1.500M1332.2 1019.9v1.500M1348.3 1019.9v1.500M1364.4 1019.9v1.500M1380.4 1019.9v1.500M1396.5 1019.9v1.500M1412.6 1019.9v1.500M1428.6 1019.9v1.500M1444.7 1019.9v1.500M1460.8 1019.9v1.500M1476.8 1019.9v1.500M1492.9 1019.9v1.500M1509.0 1019.9v1.500M1525.1 1019.9v1.500M1541.1 1019.9v1.500M1557.2 1019.9v1.500M1573.3 1019.9v1.500M1589.3 1019.9v1.500M1605.4 1019.9v1.500M609.1 1039.8v1.500M625.1 1039.8v1.500M641.2 1039.8v1.500M657.3 1039.8v1.500M673.4 1039.8v1.500M689.4 1039.8v1.500M705.5 1039.8v1.500M721.6 1039.8v1.500M737.6 1039.8v1.500M753.7 1039.8v1.500M769.8 1039.8v1.500M785.8 1039.8v1.500M801.9 1039.8v1.500M818.0 1039.8v1.500M834.0 1039.8v1.500M850.1 1039.8v1.500M866.2 1039.8v1.500M882.3 1039.8v1.500M898.3 1039.8v1.500M914.4 1039.8v1.500M930.5 1039.8v1.500M946.5 1039.8v1.500M962.6 1039.8v1.500M978.7 1039.8v1.500M994.8 1039.8v1.500M1010.8 1039.8v1.500M1026.9 1039.8v1.500M1043.0 1039.8v1.500M1059.0 1039.8v1.500M1075.1 1039.8v1.500M1091.2 1039.8v1.500M1107.2 1039.8v1.500M1123.3 1039.8v1.500M1139.4 1039.8v1.500M1155.5 1039.8v1.500M1171.5 1039.8v1.500M1187.6 1039.8v1.500M1203.7 1039.8v1.500M1219.7 1039.8v1.500M1235.8 1039.8v1.500M1251.9 1039.8v1.500M1267.9 1039.8v1.500M1284.0 1039.8v1.500M1300.1 1039.8v1.500M1316.2 1039.8v1.500M1332.2 1039.8v1.500M1348.3 1039.8v1.500M1364.4 1039.8v1.500M1380.4 1039.8v1.500M1396.5 1039.8v1.500M1412.6 1039.8v1.500M1428.6 1039.8v1.500M1444.7 1039.8v1.500M1460.8 1039.8v1.500M1476.8 1039.8v1.500M1492.9 1039.8v1.500M1509.0 1039.8v1.500M1525.1 1039.8v1.500M1541.1 1039.8v1.500M1557.2 1039.8v1.500M1573.3 1039.8v1.500M1589.3 1039.8v1.500M1605.4 1039.8v1.500" stroke="#3a3a3a" stroke-width="1" fill="none" opacity="0.550"/><path d="M613.0 831.5H687.4M682.4 828.5L687.4 831.5L682.4 834.5M725.5 831.5H799.8M794.8 828.5L799.8 831.5L794.8 834.5M613.0 851.4H687.4M682.4 848.4L687.4 851.4L682.4 854.4M725.5 851.4H799.8M794.8 848.4L799.8 851.4L794.8 854.4M613.0 990.4H687.4M682.4 987.4L687.4 990.4L682.4 993.4M725.5 990.4H799.8M794.8 987.4L799.8 990.4L794.8 993.4M613.0 1010.3H687.4M682.4 1007.3L687.4 1010.3L682.4 1013.3M725.5 1010.3H799.8M794.8 1007.3L799.8 1010.3L794.8 1013.3" stroke="#1c1c1c" stroke-width="1" fill="none"/><circle cx="600.5" cy="831.5" r="3.200" fill="#151515"/><circle cx="696.9" cy="831.5" r="3.200" fill="#151515"/><circle cx="713.0" cy="831.5" r="3.200" fill="#151515"/><circle cx="809.4" cy="831.5" r="3.200" fill="#151515"/><circle cx="600.5" cy="851.4" r="3.200" fill="#151515"/><circle cx="696.9" cy="851.4" r="3.200" fill="#151515"/><circle cx="713.0" cy="851.4" r="3.200" fill="#151515"/><circle cx="809.4" cy="851.4" r="3.200" fill="#151515"/><circle cx="600.5" cy="871.2" r="3.200" fill="#151515"/><circle cx="600.5" cy="891.1" r="3.200" fill="#151515"/><circle cx="600.5" cy="911.0" r="3.200" fill="#151515"/><circle cx="600.5" cy="930.8" r="3.200" fill="#151515"/><circle cx="600.5" cy="950.7" r="3.200" fill="#151515"/><circle cx="600.5" cy="970.5" r="3.200" fill="#151515"/><circle cx="600.5" cy="990.4" r="3.200" fill="#151515"/><circle cx="696.9" cy="990.4" r="3.200" fill="#151515"/><circle cx="713.0" cy="990.4" r="3.200" fill="#151515"/><circle cx="809.4" cy="990.4" r="3.200" fill="#151515"/><circle cx="600.5" cy="1010.3" r="3.200" fill="#151515"/><circle cx="696.9" cy="1010.3" r="3.200" fill="#151515"/><circle cx="713.0" cy="1010.3" r="3.200" fill="#151515"/><circle cx="809.4" cy="1010.3" r="3.200" fill="#151515"/><circle cx="600.5" cy="1030.1" r="3.200" fill="#151515"/><circle cx="600.5" cy="1050.0" r="3.200" fill="#151515"/></svg>
<div class="a" style="left:342px;top:1059px;width:1276px;height:10px;background:#2a2a2a"></div>
<div class="a" style="left:342px;top:1069px;width:1276px;height:9px;background:#474747"></div>
<div class="a" style="left:593px;top:1070px;width:85px;height:8px;background:#cfcfcf"></div>
<div class="a" style="left:1610px;top:820px;width:8px;height:250px;background:#2a2a2a"></div>
<div class="a" style="left:648.500px;top:815px;width:1.500px;height:253px;background:#3f86d8"></div>
<svg style="left:642px;top:786px" width="14" height="33" viewBox="0 0 14 33"><path d="M1.500 0H12.500Q14 0 14 1.500V27L7 33L0 27V1.500Q0 0 1.500 0Z" fill="#3a82d6"/></svg>
<!-- p6_right -->
<div class="a" style="left:1622px;top:42px;width:298px;height:10px;background:#2d2d2d"></div>
<div class="a" style="left:1622px;top:52px;width:298px;height:21px;background:#2a2a2a;border-top:1px solid #262626;border-bottom:1px solid #262626"></div>
<div class="a" style="left:1622px;top:53px;width:63px;height:19px;background:#2d2d2d;border-right:1px solid #232323"></div>
<div class="a" style="left:1685px;top:53px;width:49px;height:20px;background:#323232"></div>
<div class="a" style="left:1734px;top:53px;width:86px;height:19px;background:#2d2d2d;border-right:1px solid #232323;border-left:1px solid #232323"></div>
<div class="a" style="left:1820px;top:53px;width:46px;height:19px;background:#2d2d2d;border-right:1px solid #232323"></div>
<div class="t dim" style="left:1629px;top:55px;font-size:10.500px;letter-spacing:-0.450px;font-weight:bold;color:#626262">Properties</div>
<div class="t b" style="left:1693px;top:55px;font-size:11px;letter-spacing:-0.350px">Library</div>
<div class="t dim" style="left:1741px;top:55px;font-size:10.500px;letter-spacing:-0.450px;font-weight:bold;color:#626262">Motion Presets</div>
<div class="t dim" style="left:1828px;top:55px;font-size:10.500px;letter-spacing:-0.450px;font-weight:bold;color:#626262">Assets</div>
<div class="a" style="left:1626px;top:77px;width:242px;height:21px;background:#262626;border:1px solid #5a5a5a;border-radius:3px"></div>
<div class="t" style="left:1635px;top:81px;font-size:12px;letter-spacing:-0.450px;color:#e6e6e6">Charu Character Rigged.fla</div>
<svg style="left:1848px;top:83px" width="12" height="8" viewBox="0 0 12 8"><path d="M1.500 1.500L6 6L10.500 1.500" class="ics" stroke-width="1.800"/></svg>
<svg style="left:1875px;top:84px" width="19" height="9" viewBox="0 0 19 9"><path d="M0.500 4.500H11" stroke="#dcdcdc" stroke-width="1.500"/><circle cx="14" cy="4.500" r="3.800" fill="#dcdcdc"/></svg>
<svg style="left:1903px;top:81px" width="16" height="15" viewBox="0 0 16 15"><rect x="0.700" y="0.700" width="9" height="9" fill="#9a9a9a" stroke="#dcdcdc" stroke-width="1.300"/><rect x="4.700" y="4.200" width="10" height="10" fill="#9a9a9a" stroke="#dcdcdc" stroke-width="1.300"/></svg>
<div class="a" style="left:1622px;top:101px;width:298px;height:1px;background:#3e3e3e"></div>
<div class="a" style="left:1622px;top:242px;width:298px;height:5px;background:#474747"></div>
<div class="t" style="left:1625px;top:254px;font-size:12px;letter-spacing:-0.300px">33 items</div>
<div class="a" style="left:1787px;top:249px;width:133px;height:21px;background:#1c1c1c;border:1px solid #666;border-right:none;border-radius:4px 0 0 4px"></div>
<svg style="left:1795px;top:252px" width="15" height="15" viewBox="0 0 15 15"><circle cx="6" cy="6" r="4.500" fill="none" stroke="#dcdcdc" stroke-width="1.500"/><path d="M9.500 9.500L14 14" stroke="#dcdcdc" stroke-width="1.800"/></svg>
<div class="t" style="left:1637px;top:283px;font-size:10.500px;letter-spacing:-0.200px">Name</div>
<svg style="left:1676px;top:283px" width="9" height="11" viewBox="0 0 9 11"><path d="M4.500 10.500V1.500M1.500 4.500L4.500 1.200L7.500 4.500" fill="none" stroke="#dcdcdc" stroke-width="1.400"/></svg>
<div class="a" style="left:1853px;top:273px;width:1px;height:32px;background:#3c3c3c"></div>
<div class="t" style="left:1869px;top:283px;font-size:10.500px;letter-spacing:-0.200px">Linkage</div>
<div class="a" style="left:1623px;top:304px;width:297px;height:760px;background:#2d2d2d;border:1px solid #3c3c3c;border-right:none;border-radius:3px 0 0 0"></div>
<svg style="left:1645px;top:309.0px" width="18" height="16" viewBox="0 0 18 16"><path d="M9.500 1 L2 9.500 H9.500Z" fill="none" stroke="#cfcfcf" stroke-width="1.400"/><rect x="9" y="6.500" width="7" height="7" fill="#cfcfcf"/><circle cx="7" cy="11.500" r="3.200" fill="#2d2d2d" stroke="#cfcfcf" stroke-width="1.500"/></svg>
<div class="t" style="left:1670px;top:311.0px;font-size:12px;letter-spacing:-0.400px;color:#dedede">C Front army</div>
<svg style="left:1645px;top:335.2px" width="18" height="16" viewBox="0 0 18 16"><path d="M9.500 1 L2 9.500 H9.500Z" fill="none" stroke="#cfcfcf" stroke-width="1.400"/><rect x="9" y="6.500" width="7" height="7" fill="#cfcfcf"/><circle cx="7" cy="11.500" r="3.200" fill="#2d2d2d" stroke="#cfcfcf" stroke-width="1.500"/></svg>
<div class="t" style="left:1667px;top:337.2px;font-size:12px;letter-spacing:-0.400px;color:#dedede">C back Army</div>
<svg style="left:1645px;top:361.3px" width="18" height="16" viewBox="0 0 18 16"><path d="M9.500 1 L2 9.500 H9.500Z" fill="none" stroke="#cfcfcf" stroke-width="1.400"/><rect x="9" y="6.500" width="7" height="7" fill="#cfcfcf"/><circle cx="7" cy="11.500" r="3.200" fill="#2d2d2d" stroke="#cfcfcf" stroke-width="1.500"/></svg>
<div class="t" style="left:1667px;top:363.3px;font-size:12px;letter-spacing:-0.400px;color:#dedede">C Back D hand</div>
<svg style="left:1645px;top:387.5px" width="18" height="16" viewBox="0 0 18 16"><path d="M9.500 1 L2 9.500 H9.500Z" fill="none" stroke="#cfcfcf" stroke-width="1.400"/><rect x="9" y="6.500" width="7" height="7" fill="#cfcfcf"/><circle cx="7" cy="11.500" r="3.200" fill="#2d2d2d" stroke="#cfcfcf" stroke-width="1.500"/></svg>
<div class="t" style="left:1667px;top:389.5px;font-size:12px;letter-spacing:-0.400px;color:#dedede">C Back hand</div>
<svg style="left:1645px;top:413.7px" width="18" height="16" viewBox="0 0 18 16"><path d="M9.500 1 L2 9.500 H9.500Z" fill="none" stroke="#cfcfcf" stroke-width="1.400"/><rect x="9" y="6.500" width="7" height="7" fill="#cfcfcf"/><circle cx="7" cy="11.500" r="3.200" fill="#2d2d2d" stroke="#cfcfcf" stroke-width="1.500"/></svg>
<div class="t" style="left:1667px;top:415.7px;font-size:12px;letter-spacing:-0.400px;color:#dedede">C back leg</div>
<svg style="left:1645px;top:439.9px" width="18" height="16" viewBox="0 0 18 16"><path d="M9.500 1 L2 9.500 H9.500Z" fill="none" stroke="#cfcfcf" stroke-width="1.400"/><rect x="9" y="6.500" width="7" height="7" fill="#cfcfcf"/><circle cx="7" cy="11.500" r="3.200" fill="#2d2d2d" stroke="#cfcfcf" stroke-width="1.500"/></svg>
<div class="t" style="left:1667px;top:441.9px;font-size:12px;letter-spacing:-0.400px;color:#dedede">C Choti</div>
<svg style="left:1645px;top:466.0px" width="18" height="16" viewBox="0 0 18 16"><path d="M9.500 1 L2 9.500 H9.500Z" fill="none" stroke="#cfcfcf" stroke-width="1.400"/><rect x="9" y="6.500" width="7" height="7" fill="#cfcfcf"/><circle cx="7" cy="11.500" r="3.200" fill="#2d2d2d" stroke="#cfcfcf" stroke-width="1.500"/></svg>
<div class="t" style="left:1667px;top:468.0px;font-size:12px;letter-spacing:-0.400px;color:#dedede">C Dn Part</div>
<svg style="left:1645px;top:492.2px" width="18" height="16" viewBox="0 0 18 16"><path d="M9.500 1 L2 9.500 H9.500Z" fill="none" stroke="#cfcfcf" stroke-width="1.400"/><rect x="9" y="6.500" width="7" height="7" fill="#cfcfcf"/><circle cx="7" cy="11.500" r="3.200" fill="#2d2d2d" stroke="#cfcfcf" stroke-width="1.500"/></svg>
<div class="t" style="left:1667px;top:494.2px;font-size:12px;letter-spacing:-0.400px;color:#dedede">C Ear</div>
<svg style="left:1645px;top:518.4px" width="18" height="16" viewBox="0 0 18 16"><path d="M9.500 1 L2 9.500 H9.500Z" fill="none" stroke="#cfcfcf" stroke-width="1.400"/><rect x="9" y="6.500" width="7" height="7" fill="#cfcfcf"/><circle cx="7" cy="11.500" r="3.200" fill="#2d2d2d" stroke="#cfcfcf" stroke-width="1.500"/></svg>
<div class="t" style="left:1667px;top:520.4px;font-size:12px;letter-spacing:-0.400px;color:#dedede">C Front D hand</div>
<svg style="left:1645px;top:544.5px" width="18" height="16" viewBox="0 0 18 16"><path d="M9.500 1 L2 9.500 H9.500Z" fill="none" stroke="#cfcfcf" stroke-width="1.400"/><rect x="9" y="6.500" width="7" height="7" fill="#cfcfcf"/><circle cx="7" cy="11.500" r="3.200" fill="#2d2d2d" stroke="#cfcfcf" stroke-width="1.500"/></svg>
<div class="t" style="left:1667px;top:546.5px;font-size:12px;letter-spacing:-0.400px;color:#dedede">C Front hand</div>
<svg style="left:1645px;top:570.7px" width="18" height="16" viewBox="0 0 18 16"><path d="M9.500 1 L2 9.500 H9.500Z" fill="none" stroke="#cfcfcf" stroke-width="1.400"/><rect x="9" y="6.500" width="7" height="7" fill="#cfcfcf"/><circle cx="7" cy="11.500" r="3.200" fill="#2d2d2d" stroke="#cfcfcf" stroke-width="1.500"/></svg>
<div class="t" style="left:1667px;top:572.7px;font-size:12px;letter-spacing:-0.400px;color:#dedede">C Front leg</div>
<svg style="left:1645px;top:596.9px" width="18" height="16" viewBox="0 0 18 16"><path d="M9.500 1 L2 9.500 H9.500Z" fill="none" stroke="#cfcfcf" stroke-width="1.400"/><rect x="9" y="6.500" width="7" height="7" fill="#cfcfcf"/><circle cx="7" cy="11.500" r="3.200" fill="#2d2d2d" stroke="#cfcfcf" stroke-width="1.500"/></svg>
<div class="t" style="left:1667px;top:598.9px;font-size:12px;letter-spacing:-0.400px;color:#dedede">C Hair and Face Part</div>
<svg style="left:1645px;top:623.0px" width="18" height="16" viewBox="0 0 18 16"><path d="M9.500 1 L2 9.500 H9.500Z" fill="none" stroke="#cfcfcf" stroke-width="1.400"/><rect x="9" y="6.500" width="7" height="7" fill="#cfcfcf"/><circle cx="7" cy="11.500" r="3.200" fill="#2d2d2d" stroke="#cfcfcf" stroke-width="1.500"/></svg>
<div class="t" style="left:1667px;top:625.0px;font-size:12px;letter-spacing:-0.400px;color:#dedede">C Head</div>
<svg style="left:1645px;top:649.2px" width="18" height="16" viewBox="0 0 18 16"><path d="M9.500 1 L2 9.500 H9.500Z" fill="none" stroke="#cfcfcf" stroke-width="1.400"/><rect x="9" y="6.500" width="7" height="7" fill="#cfcfcf"/><circle cx="7" cy="11.500" r="3.200" fill="#2d2d2d" stroke="#cfcfcf" stroke-width="1.500"/></svg>
<div class="t" style="left:1667px;top:651.2px;font-size:12px;letter-spacing:-0.400px;color:#dedede">C Jowline</div>
<svg style="left:1645px;top:675.4px" width="18" height="16" viewBox="0 0 18 16"><path d="M9.500 1 L2 9.500 H9.500Z" fill="none" stroke="#cfcfcf" stroke-width="1.400"/><rect x="9" y="6.500" width="7" height="7" fill="#cfcfcf"/><circle cx="7" cy="11.500" r="3.200" fill="#2d2d2d" stroke="#cfcfcf" stroke-width="1.500"/></svg>
<div class="t" style="left:1667px;top:677.4px;font-size:12px;letter-spacing:-0.400px;color:#dedede">C Lips</div>
<svg style="left:1645px;top:701.5px" width="18" height="16" viewBox="0 0 18 16"><path d="M9.500 1 L2 9.500 H9.500Z" fill="none" stroke="#cfcfcf" stroke-width="1.400"/><rect x="9" y="6.500" width="7" height="7" fill="#cfcfcf"/><circle cx="7" cy="11.500" r="3.200" fill="#2d2d2d" stroke="#cfcfcf" stroke-width="1.500"/></svg>
<div class="t" style="left:1667px;top:703.5px;font-size:12px;letter-spacing:-0.400px;color:#dedede">C Lips and Jowline</div>
<svg style="left:1645px;top:727.7px" width="18" height="16" viewBox="0 0 18 16"><path d="M9.500 1 L2 9.500 H9.500Z" fill="none" stroke="#cfcfcf" stroke-width="1.400"/><rect x="9" y="6.500" width="7" height="7" fill="#cfcfcf"/><circle cx="7" cy="11.500" r="3.200" fill="#2d2d2d" stroke="#cfcfcf" stroke-width="1.500"/></svg>
<div class="t" style="left:1667px;top:729.7px;font-size:12px;letter-spacing:-0.400px;color:#dedede">C Mid Body Part</div>
<svg style="left:1645px;top:753.9px" width="18" height="16" viewBox="0 0 18 16"><path d="M9.500 1 L2 9.500 H9.500Z" fill="none" stroke="#cfcfcf" stroke-width="1.400"/><rect x="9" y="6.500" width="7" height="7" fill="#cfcfcf"/><circle cx="7" cy="11.500" r="3.200" fill="#2d2d2d" stroke="#cfcfcf" stroke-width="1.500"/></svg>
<div class="t" style="left:1667px;top:755.9px;font-size:12px;letter-spacing:-0.400px;color:#dedede">C Nose</div>
<svg style="left:1645px;top:780.1px" width="18" height="16" viewBox="0 0 18 16"><path d="M9.500 1 L2 9.500 H9.500Z" fill="none" stroke="#cfcfcf" stroke-width="1.400"/><rect x="9" y="6.500" width="7" height="7" fill="#cfcfcf"/><circle cx="7" cy="11.500" r="3.200" fill="#2d2d2d" stroke="#cfcfcf" stroke-width="1.500"/></svg>
<div class="t" style="left:1667px;top:782.1px;font-size:12px;letter-spacing:-0.400px;color:#dedede">Charu Character Rigged</div>
<svg style="left:1645px;top:806.2px" width="18" height="16" viewBox="0 0 18 16"><path d="M9.500 1 L2 9.500 H9.500Z" fill="none" stroke="#cfcfcf" stroke-width="1.400"/><rect x="9" y="6.500" width="7" height="7" fill="#cfcfcf"/><circle cx="7" cy="11.500" r="3.200" fill="#2d2d2d" stroke="#cfcfcf" stroke-width="1.500"/></svg>
<div class="t" style="left:1667px;top:808.2px;font-size:12px;letter-spacing:-0.400px;color:#dedede">Charu Character Without Rigged</div>
<svg style="left:1645px;top:832.4px" width="18" height="16" viewBox="0 0 18 16"><path d="M9.500 1 L2 9.500 H9.500Z" fill="none" stroke="#cfcfcf" stroke-width="1.400"/><rect x="9" y="6.500" width="7" height="7" fill="#cfcfcf"/><circle cx="7" cy="11.500" r="3.200" fill="#2d2d2d" stroke="#cfcfcf" stroke-width="1.500"/></svg>
<div class="t" style="left:1667px;top:834.4px;font-size:12px;letter-spacing:-0.400px;color:#dedede">flower 2</div>
<svg style="left:1645px;top:858.6px" width="18" height="16" viewBox="0 0 18 16"><path d="M9.500 1 L2 9.500 H9.500Z" fill="none" stroke="#cfcfcf" stroke-width="1.400"/><rect x="9" y="6.500" width="7" height="7" fill="#cfcfcf"/><circle cx="7" cy="11.500" r="3.200" fill="#2d2d2d" stroke="#cfcfcf" stroke-width="1.500"/></svg>
<div class="t" style="left:1667px;top:860.6px;font-size:12px;letter-spacing:-0.400px;color:#dedede">R B Eyebrow</div>
<svg style="left:1645px;top:884.7px" width="18" height="16" viewBox="0 0 18 16"><path d="M9.500 1 L2 9.500 H9.500Z" fill="none" stroke="#cfcfcf" stroke-width="1.400"/><rect x="9" y="6.500" width="7" height="7" fill="#cfcfcf"/><circle cx="7" cy="11.500" r="3.200" fill="#2d2d2d" stroke="#cfcfcf" stroke-width="1.500"/></svg>
<div class="t" style="left:1667px;top:886.7px;font-size:12px;letter-spacing:-0.400px;color:#dedede">R B Eyebrow In</div>
<svg style="left:1645px;top:910.9px" width="18" height="16" viewBox="0 0 18 16"><path d="M9.500 1 L2 9.500 H9.500Z" fill="none" stroke="#cfcfcf" stroke-width="1.400"/><rect x="9" y="6.500" width="7" height="7" fill="#cfcfcf"/><circle cx="7" cy="11.500" r="3.200" fill="#2d2d2d" stroke="#cfcfcf" stroke-width="1.500"/></svg>
<div class="t" style="left:1667px;top:912.9px;font-size:12px;letter-spacing:-0.400px;color:#dedede">R B Eyeliser and Eyeblink</div>
<svg style="left:1645px;top:937.1px" width="18" height="16" viewBox="0 0 18 16"><path d="M9.500 1 L2 9.500 H9.500Z" fill="none" stroke="#cfcfcf" stroke-width="1.400"/><rect x="9" y="6.500" width="7" height="7" fill="#cfcfcf"/><circle cx="7" cy="11.500" r="3.200" fill="#2d2d2d" stroke="#cfcfcf" stroke-width="1.500"/></svg>
<div class="t" style="left:1667px;top:939.1px;font-size:12px;letter-spacing:-0.400px;color:#dedede">R B Line</div>
<svg style="left:1645px;top:963.2px" width="18" height="16" viewBox="0 0 18 16"><path d="M9.500 1 L2 9.500 H9.500Z" fill="none" stroke="#cfcfcf" stroke-width="1.400"/><rect x="9" y="6.500" width="7" height="7" fill="#cfcfcf"/><circle cx="7" cy="11.500" r="3.200" fill="#2d2d2d" stroke="#cfcfcf" stroke-width="1.500"/></svg>
<div class="t" style="left:1667px;top:965.2px;font-size:12px;letter-spacing:-0.400px;color:#dedede">R Eyeball</div>
<svg style="left:1645px;top:989.4px" width="18" height="16" viewBox="0 0 18 16"><path d="M9.500 1 L2 9.500 H9.500Z" fill="none" stroke="#cfcfcf" stroke-width="1.400"/><rect x="9" y="6.500" width="7" height="7" fill="#cfcfcf"/><circle cx="7" cy="11.500" r="3.200" fill="#2d2d2d" stroke="#cfcfcf" stroke-width="1.500"/></svg>
<div class="t" style="left:1667px;top:991.4px;font-size:12px;letter-spacing:-0.400px;color:#dedede">R Eyeball In</div>
<svg style="left:1645px;top:1015.6px" width="18" height="16" viewBox="0 0 18 16"><path d="M9.500 1 L2 9.500 H9.500Z" fill="none" stroke="#cfcfcf" stroke-width="1.400"/><rect x="9" y="6.500" width="7" height="7" fill="#cfcfcf"/><circle cx="7" cy="11.500" r="3.200" fill="#2d2d2d" stroke="#cfcfcf" stroke-width="1.500"/></svg>
<div class="t" style="left:1667px;top:1017.6px;font-size:12px;letter-spacing:-0.400px;color:#dedede">R Eyes</div>
<svg style="left:1645px;top:1041.8px" width="18" height="16" viewBox="0 0 18 16"><path d="M9.500 1 L2 9.500 H9.500Z" fill="none" stroke="#cfcfcf" stroke-width="1.400"/><rect x="9" y="6.500" width="7" height="7" fill="#cfcfcf"/><circle cx="7" cy="11.500" r="3.200" fill="#2d2d2d" stroke="#cfcfcf" stroke-width="1.500"/></svg>
<div class="t" style="left:1667px;top:1043.8px;font-size:12px;letter-spacing:-0.400px;color:#dedede">R F Eyebrow</div>
<div class="a" style="left:1918px;top:306px;width:2px;height:700px;background:#d0d0d0"></div>
<div class="a" style="left:1622px;top:1063px;width:298px;height:15px;background:#2d2d2d"></div>
<div class="a" style="left:1917px;top:1006px;width:3px;height:72px;background:#383838"></div>
<div class="a" style="left:1685px;top:1071px;width:118px;height:7px;background:#cfcfcf"></div>
<svg style="left:1624px;top:1064px" width="11" height="11" viewBox="0 0 11 11"><rect x="0.600" y="0.600" width="9.800" height="9.800" fill="none" stroke="#dcdcdc" stroke-width="1.200"/><path d="M5.500 2.500V8.500M2.500 5.500H8.500" stroke="#dcdcdc" stroke-width="1.200"/></svg>
<svg style="left:1639px;top:1064px" width="14" height="11" viewBox="0 0 14 11"><path d="M0.500 1Q0.500 0.500 1 0.500H5L6.200 2H13Q13.500 2 13.500 2.500V10Q13.500 10.500 13 10.500H1Q0.500 10.500 0.500 10Z" fill="#dcdcdc"/></svg>
<svg style="left:1656px;top:1063px" width="12" height="12" viewBox="0 0 12 12"><circle cx="6" cy="6" r="5.700" fill="#dcdcdc"/><rect x="5.200" y="5" width="1.800" height="4.500" fill="#323232"/><circle cx="6.100" cy="3.200" r="1" fill="#323232"/></svg>
<svg style="left:1672px;top:1063px" width="11" height="12" viewBox="0 0 11 12"><path d="M0.500 2H10.500V3.200H0.500ZM3.500 0.500H7.500V1.800H3.500ZM1.500 4H9.500L8.800 11.500H2.200Z" fill="#dcdcdc"/><path d="M4 5V10.500M5.500 5V10.500M7 5V10.500" stroke="#323232" stroke-width="0.700"/></svg>
<div class="a" style="left:1900px;top:42px;width:20px;height:32px;overflow:hidden"><svg style="left:12px;top:2px" width="9" height="7" viewBox="0 0 9 7"><path d="M1 0.5L4 3.5L1 6.5M5 0.5L8 3.5L5 6.5" stroke="#d0d0d0" stroke-width="1.3" fill="none"/></svg><svg style="left:11px;top:16px" width="11" height="8" viewBox="0 0 11 8"><path d="M0 0.5H11M0 2.8H11M0 5.1H11M0 7.4H11" stroke="#bdbdbd" stroke-width="1" fill="none"/></svg></div>
<!-- p7_overlay -->
<svg style="left:0;top:0;pointer-events:none" width="1920" height="1080" viewBox="0 0 1920 1080">
<g fill="#000" opacity="0.11" font-family="'DejaVu Sans','Liberation Sans',sans-serif" font-weight="bold">
<g transform="translate(168.5 3.8) rotate(-45) scale(0.54) translate(-98.6 -118)"><text x="37" y="178" font-size="147" stroke="#000" stroke-width="6" stroke-linejoin="round" textLength="124" lengthAdjust="spacingAndGlyphs">A</text><text x="172" y="167" font-size="96" font-family="'Liberation Sans',sans-serif" stroke="#000" stroke-width="2.5" textLength="166" lengthAdjust="spacingAndGlyphs">yug</text><path d="M163 59.6 L164.5 33.5 L171 31 L176 26.5 L191 32.5 L190 38 L188 46 L183 51.5 Z M176.3 21.8 L192.5 28.8 L190.7 33.4 L174.5 26.4Z" opacity="0.7"/></g>
<g transform="translate(465.5 28.8) rotate(-45) scale(0.54) translate(-98.6 -118)"><text x="37" y="178" font-size="147" stroke="#000" stroke-width="6" stroke-linejoin="round" textLength="124" lengthAdjust="spacingAndGlyphs">A</text><text x="172" y="167" font-size="96" font-family="'Liberation Sans',sans-serif" stroke="#000" stroke-width="2.5" textLength="166" lengthAdjust="spacingAndGlyphs">yug</text><path d="M163 59.6 L164.5 33.5 L171 31 L176 26.5 L191 32.5 L190 38 L188 46 L183 51.5 Z M176.3 21.8 L192.5 28.8 L190.7 33.4 L174.5 26.4Z" opacity="0.7"/></g>
<g transform="translate(762.5 53.8) rotate(-45) scale(0.54) translate(-98.6 -118)"><text x="37" y="178" font-size="147" stroke="#000" stroke-width="6" stroke-linejoin="round" textLength="124" lengthAdjust="spacingAndGlyphs">A</text><text x="172" y="167" font-size="96" font-family="'Liberation Sans',sans-serif" stroke="#000" stroke-width="2.5" textLength="166" lengthAdjust="spacingAndGlyphs">yug</text><path d="M163 59.6 L164.5 33.5 L171 31 L176 26.5 L191 32.5 L190 38 L188 46 L183 51.5 Z M176.3 21.8 L192.5 28.8 L190.7 33.4 L174.5 26.4Z" opacity="0.7"/></g>
<g transform="translate(1059.5 78.8) rotate(-45) scale(0.54) translate(-98.6 -118)"><text x="37" y="178" font-size="147" stroke="#000" stroke-width="6" stroke-linejoin="round" textLength="124" lengthAdjust="spacingAndGlyphs">A</text><text x="172" y="167" font-size="96" font-family="'Liberation Sans',sans-serif" stroke="#000" stroke-width="2.5" textLength="166" lengthAdjust="spacingAndGlyphs">yug</text><path d="M163 59.6 L164.5 33.5 L171 31 L176 26.5 L191 32.5 L190 38 L188 46 L183 51.5 Z M176.3 21.8 L192.5 28.8 L190.7 33.4 L174.5 26.4Z" opacity="0.7"/></g>
<g transform="translate(1356.5 103.8) rotate(-45) scale(0.54) translate(-98.6 -118)"><text x="37" y="178" font-size="147" stroke="#000" stroke-width="6" stroke-linejoin="round" textLength="124" lengthAdjust="spacingAndGlyphs">A</text><text x="172" y="167" font-size="96" font-family="'Liberation Sans',sans-serif" stroke="#000" stroke-width="2.5" textLength="166" lengthAdjust="spacingAndGlyphs">yug</text><path d="M163 59.6 L164.5 33.5 L171 31 L176 26.5 L191 32.5 L190 38 L188 46 L183 51.5 Z M176.3 21.8 L192.5 28.8 L190.7 33.4 L174.5 26.4Z" opacity="0.7"/></g>
<g transform="translate(1653.5 128.8) rotate(-45) scale(0.54) translate(-98.6 -118)"><text x="37" y="178" font-size="147" stroke="#000" stroke-width="6" stroke-linejoin="round" textLength="124" lengthAdjust="spacingAndGlyphs">A</text><text x="172" y="167" font-size="96" font-family="'Liberation Sans',sans-serif" stroke="#000" stroke-width="2.5" textLength="166" lengthAdjust="spacingAndGlyphs">yug</text><path d="M163 59.6 L164.5 33.5 L171 31 L176 26.5 L191 32.5 L190 38 L188 46 L183 51.5 Z M176.3 21.8 L192.5 28.8 L190.7 33.4 L174.5 26.4Z" opacity="0.7"/></g>
<g transform="translate(1950.5 153.8) rotate(-45) scale(0.54) translate(-98.6 -118)"><text x="37" y="178" font-size="147" stroke="#000" stroke-width="6" stroke-linejoin="round" textLength="124" lengthAdjust="spacingAndGlyphs">A</text><text x="172" y="167" font-size="96" font-family="'Liberation Sans',sans-serif" stroke="#000" stroke-width="2.5" textLength="166" lengthAdjust="spacingAndGlyphs">yug</text><path d="M163 59.6 L164.5 33.5 L171 31 L176 26.5 L191 32.5 L190 38 L188 46 L183 51.5 Z M176.3 21.8 L192.5 28.8 L190.7 33.4 L174.5 26.4Z" opacity="0.7"/></g>
<g transform="translate(196.5 300.8) rotate(-45) scale(0.54) translate(-98.6 -118)"><text x="37" y="178" font-size="147" stroke="#000" stroke-width="6" stroke-linejoin="round" textLength="124" lengthAdjust="spacingAndGlyphs">A</text><text x="172" y="167" font-size="96" font-family="'Liberation Sans',sans-serif" stroke="#000" stroke-width="2.5" textLength="166" lengthAdjust="spacingAndGlyphs">yug</text><path d="M163 59.6 L164.5 33.5 L171 31 L176 26.5 L191 32.5 L190 38 L188 46 L183 51.5 Z M176.3 21.8 L192.5 28.8 L190.7 33.4 L174.5 26.4Z" opacity="0.7"/></g>
<g transform="translate(493.5 325.8) rotate(-45) scale(0.54) translate(-98.6 -118)"><text x="37" y="178" font-size="147" stroke="#000" stroke-width="6" stroke-linejoin="round" textLength="124" lengthAdjust="spacingAndGlyphs">A</text><text x="172" y="167" font-size="96" font-family="'Liberation Sans',sans-serif" stroke="#000" stroke-width="2.5" textLength="166" lengthAdjust="spacingAndGlyphs">yug</text><path d="M163 59.6 L164.5 33.5 L171 31 L176 26.5 L191 32.5 L190 38 L188 46 L183 51.5 Z M176.3 21.8 L192.5 28.8 L190.7 33.4 L174.5 26.4Z" opacity="0.7"/></g>
<g transform="translate(790.5 350.8) rotate(-45) scale(0.54) translate(-98.6 -118)"><text x="37" y="178" font-size="147" stroke="#000" stroke-width="6" stroke-linejoin="round" textLength="124" lengthAdjust="spacingAndGlyphs">A</text><text x="172" y="167" font-size="96" font-family="'Liberation Sans',sans-serif" stroke="#000" stroke-width="2.5" textLength="166" lengthAdjust="spacingAndGlyphs">yug</text><path d="M163 59.6 L164.5 33.5 L171 31 L176 26.5 L191 32.5 L190 38 L188 46 L183 51.5 Z M176.3 21.8 L192.5 28.8 L190.7 33.4 L174.5 26.4Z" opacity="0.7"/></g>
<g transform="translate(1087.5 375.8) rotate(-45) scale(0.54) translate(-98.6 -118)"><text x="37" y="178" font-size="147" stroke="#000" stroke-width="6" stroke-linejoin="round" textLength="124" lengthAdjust="spacingAndGlyphs">A</text><text x="172" y="167" font-size="96" font-family="'Liberation Sans',sans-serif" stroke="#000" stroke-width="2.5" textLength="166" lengthAdjust="spacingAndGlyphs">yug</text><path d="M163 59.6 L164.5 33.5 L171 31 L176 26.5 L191 32.5 L190 38 L188 46 L183 51.5 Z M176.3 21.8 L192.5 28.8 L190.7 33.4 L174.5 26.4Z" opacity="0.7"/></g>
<g transform="translate(1384.5 400.8) rotate(-45) scale(0.54) translate(-98.6 -118)"><text x="37" y="178" font-size="147" stroke="#000" stroke-width="6" stroke-linejoin="round" textLength="124" lengthAdjust="spacingAndGlyphs">A</text><text x="172" y="167" font-size="96" font-family="'Liberation Sans',sans-serif" stroke="#000" stroke-width="2.5" textLength="166" lengthAdjust="spacingAndGlyphs">yug</text><path d="M163 59.6 L164.5 33.5 L171 31 L176 26.5 L191 32.5 L190 38 L188 46 L183 51.5 Z M176.3 21.8 L192.5 28.8 L190.7 33.4 L174.5 26.4Z" opacity="0.7"/></g>
<g transform="translate(1681.5 425.8) rotate(-45) scale(0.54) translate(-98.6 -118)"><text x="37" y="178" font-size="147" stroke="#000" stroke-width="6" stroke-linejoin="round" textLength="124" lengthAdjust="spacingAndGlyphs">A</text><text x="172" y="167" font-size="96" font-family="'Liberation Sans',sans-serif" stroke="#000" stroke-width="2.5" textLength="166" lengthAdjust="spacingAndGlyphs">yug</text><path d="M163 59.6 L164.5 33.5 L171 31 L176 26.5 L191 32.5 L190 38 L188 46 L183 51.5 Z M176.3 21.8 L192.5 28.8 L190.7 33.4 L174.5 26.4Z" opacity="0.7"/></g>
<g transform="translate(1978.5 450.8) rotate(-45) scale(0.54) translate(-98.6 -118)"><text x="37" y="178" font-size="147" stroke="#000" stroke-width="6" stroke-linejoin="round" textLength="124" lengthAdjust="spacingAndGlyphs">A</text><text x="172" y="167" font-size="96" font-family="'Liberation Sans',sans-serif" stroke="#000" stroke-width="2.5" textLength="166" lengthAdjust="spacingAndGlyphs">yug</text><path d="M163 59.6 L164.5 33.5 L171 31 L176 26.5 L191 32.5 L190 38 L188 46 L183 51.5 Z M176.3 21.8 L192.5 28.8 L190.7 33.4 L174.5 26.4Z" opacity="0.7"/></g>
<g transform="translate(224.5 597.8) rotate(-45) scale(0.54) translate(-98.6 -118)"><text x="37" y="178" font-size="147" stroke="#000" stroke-width="6" stroke-linejoin="round" textLength="124" lengthAdjust="spacingAndGlyphs">A</text><text x="172" y="167" font-size="96" font-family="'Liberation Sans',sans-serif" stroke="#000" stroke-width="2.5" textLength="166" lengthAdjust="spacingAndGlyphs">yug</text><path d="M163 59.6 L164.5 33.5 L171 31 L176 26.5 L191 32.5 L190 38 L188 46 L183 51.5 Z M176.3 21.8 L192.5 28.8 L190.7 33.4 L174.5 26.4Z" opacity="0.7"/></g>
<g transform="translate(521.5 622.8) rotate(-45) scale(0.54) translate(-98.6 -118)"><text x="37" y="178" font-size="147" stroke="#000" stroke-width="6" stroke-linejoin="round" textLength="124" lengthAdjust="spacingAndGlyphs">A</text><text x="172" y="167" font-size="96" font-family="'Liberation Sans',sans-serif" stroke="#000" stroke-width="2.5" textLength="166" lengthAdjust="spacingAndGlyphs">yug</text><path d="M163 59.6 L164.5 33.5 L171 31 L176 26.5 L191 32.5 L190 38 L188 46 L183 51.5 Z M176.3 21.8 L192.5 28.8 L190.7 33.4 L174.5 26.4Z" opacity="0.7"/></g>
<g transform="translate(818.5 647.8) rotate(-45) scale(0.54) translate(-98.6 -118)"><text x="37" y="178" font-size="147" stroke="#000" stroke-width="6" stroke-linejoin="round" textLength="124" lengthAdjust="spacingAndGlyphs">A</text><text x="172" y="167" font-size="96" font-family="'Liberation Sans',sans-serif" stroke="#000" stroke-width="2.5" textLength="166" lengthAdjust="spacingAndGlyphs">yug</text><path d="M163 59.6 L164.5 33.5 L171 31 L176 26.5 L191 32.5 L190 38 L188 46 L183 51.5 Z M176.3 21.8 L192.5 28.8 L190.7 33.4 L174.5 26.4Z" opacity="0.7"/></g>
<g transform="translate(1115.5 672.8) rotate(-45) scale(0.54) translate(-98.6 -118)"><text x="37" y="178" font-size="147" stroke="#000" stroke-width="6" stroke-linejoin="round" textLength="124" lengthAdjust="spacingAndGlyphs">A</text><text x="172" y="167" font-size="96" font-family="'Liberation Sans',sans-serif" stroke="#000" stroke-width="2.5" textLength="166" lengthAdjust="spacingAndGlyphs">yug</text><path d="M163 59.6 L164.5 33.5 L171 31 L176 26.5 L191 32.5 L190 38 L188 46 L183 51.5 Z M176.3 21.8 L192.5 28.8 L190.7 33.4 L174.5 26.4Z" opacity="0.7"/></g>
<g transform="translate(1412.5 697.8) rotate(-45) scale(0.54) translate(-98.6 -118)"><text x="37" y="178" font-size="147" stroke="#000" stroke-width="6" stroke-linejoin="round" textLength="124" lengthAdjust="spacingAndGlyphs">A</text><text x="172" y="167" font-size="96" font-family="'Liberation Sans',sans-serif" stroke="#000" stroke-width="2.5" textLength="166" lengthAdjust="spacingAndGlyphs">yug</text><path d="M163 59.6 L164.5 33.5 L171 31 L176 26.5 L191 32.5 L190 38 L188 46 L183 51.5 Z M176.3 21.8 L192.5 28.8 L190.7 33.4 L174.5 26.4Z" opacity="0.7"/></g>
<g transform="translate(1709.5 722.8) rotate(-45) scale(0.54) translate(-98.6 -118)"><text x="37" y="178" font-size="147" stroke="#000" stroke-width="6" stroke-linejoin="round" textLength="124" lengthAdjust="spacingAndGlyphs">A</text><text x="172" y="167" font-size="96" font-family="'Liberation Sans',sans-serif" stroke="#000" stroke-width="2.5" textLength="166" lengthAdjust="spacingAndGlyphs">yug</text><path d="M163 59.6 L164.5 33.5 L171 31 L176 26.5 L191 32.5 L190 38 L188 46 L183 51.5 Z M176.3 21.8 L192.5 28.8 L190.7 33.4 L174.5 26.4Z" opacity="0.7"/></g>
<g transform="translate(-44.5 869.8) rotate(-45) scale(0.54) translate(-98.6 -118)"><text x="37" y="178" font-size="147" stroke="#000" stroke-width="6" stroke-linejoin="round" textLength="124" lengthAdjust="spacingAndGlyphs">A</text><text x="172" y="167" font-size="96" font-family="'Liberation Sans',sans-serif" stroke="#000" stroke-width="2.5" textLength="166" lengthAdjust="spacingAndGlyphs">yug</text><path d="M163 59.6 L164.5 33.5 L171 31 L176 26.5 L191 32.5 L190 38 L188 46 L183 51.5 Z M176.3 21.8 L192.5 28.8 L190.7 33.4 L174.5 26.4Z" opacity="0.7"/></g>
<g transform="translate(252.5 894.8) rotate(-45) scale(0.54) translate(-98.6 -118)"><text x="37" y="178" font-size="147" stroke="#000" stroke-width="6" stroke-linejoin="round" textLength="124" lengthAdjust="spacingAndGlyphs">A</text><text x="172" y="167" font-size="96" font-family="'Liberation Sans',sans-serif" stroke="#000" stroke-width="2.5" textLength="166" lengthAdjust="spacingAndGlyphs">yug</text><path d="M163 59.6 L164.5 33.5 L171 31 L176 26.5 L191 32.5 L190 38 L188 46 L183 51.5 Z M176.3 21.8 L192.5 28.8 L190.7 33.4 L174.5 26.4Z" opacity="0.7"/></g>
<g transform="translate(549.5 919.8) rotate(-45) scale(0.54) translate(-98.6 -118)"><text x="37" y="178" font-size="147" stroke="#000" stroke-width="6" stroke-linejoin="round" textLength="124" lengthAdjust="spacingAndGlyphs">A</text><text x="172" y="167" font-size="96" font-family="'Liberation Sans',sans-serif" stroke="#000" stroke-width="2.5" textLength="166" lengthAdjust="spacingAndGlyphs">yug</text><path d="M163 59.6 L164.5 33.5 L171 31 L176 26.5 L191 32.5 L190 38 L188 46 L183 51.5 Z M176.3 21.8 L192.5 28.8 L190.7 33.4 L174.5 26.4Z" opacity="0.7"/></g>
<g transform="translate(846.5 944.8) rotate(-45) scale(0.54) translate(-98.6 -118)"><text x="37" y="178" font-size="147" stroke="#000" stroke-width="6" stroke-linejoin="round" textLength="124" lengthAdjust="spacingAndGlyphs">A</text><text x="172" y="167" font-size="96" font-family="'Liberation Sans',sans-serif" stroke="#000" stroke-width="2.5" textLength="166" lengthAdjust="spacingAndGlyphs">yug</text><path d="M163 59.6 L164.5 33.5 L171 31 L176 26.5 L191 32.5 L190 38 L188 46 L183 51.5 Z M176.3 21.8 L192.5 28.8 L190.7 33.4 L174.5 26.4Z" opacity="0.7"/></g>
<g transform="translate(1143.5 969.8) rotate(-45) scale(0.54) translate(-98.6 -118)"><text x="37" y="178" font-size="147" stroke="#000" stroke-width="6" stroke-linejoin="round" textLength="124" lengthAdjust="spacingAndGlyphs">A</text><text x="172" y="167" font-size="96" font-family="'Liberation Sans',sans-serif" stroke="#000" stroke-width="2.5" textLength="166" lengthAdjust="spacingAndGlyphs">yug</text><path d="M163 59.6 L164.5 33.5 L171 31 L176 26.5 L191 32.5 L190 38 L188 46 L183 51.5 Z M176.3 21.8 L192.5 28.8 L190.7 33.4 L174.5 26.4Z" opacity="0.7"/></g>
<g transform="translate(1440.5 994.8) rotate(-45) scale(0.54) translate(-98.6 -118)"><text x="37" y="178" font-size="147" stroke="#000" stroke-width="6" stroke-linejoin="round" textLength="124" lengthAdjust="spacingAndGlyphs">A</text><text x="172" y="167" font-size="96" font-family="'Liberation Sans',sans-serif" stroke="#000" stroke-width="2.5" textLength="166" lengthAdjust="spacingAndGlyphs">yug</text><path d="M163 59.6 L164.5 33.5 L171 31 L176 26.5 L191 32.5 L190 38 L188 46 L183 51.5 Z M176.3 21.8 L192.5 28.8 L190.7 33.4 L174.5 26.4Z" opacity="0.7"/></g>
<g transform="translate(1737.5 1019.8) rotate(-45) scale(0.54) translate(-98.6 -118)"><text x="37" y="178" font-size="147" stroke="#000" stroke-width="6" stroke-linejoin="round" textLength="124" lengthAdjust="spacingAndGlyphs">A</text><text x="172" y="167" font-size="96" font-family="'Liberation Sans',sans-serif" stroke="#000" stroke-width="2.5" textLength="166" lengthAdjust="spacingAndGlyphs">yug</text><path d="M163 59.6 L164.5 33.5 L171 31 L176 26.5 L191 32.5 L190 38 L188 46 L183 51.5 Z M176.3 21.8 L192.5 28.8 L190.7 33.4 L174.5 26.4Z" opacity="0.7"/></g>
</g></svg>
<svg style="left:0;top:0;pointer-events:none" width="400" height="230" viewBox="0 0 400 230">
<defs>
<linearGradient id="gA" x1="0" y1="68" x2="0" y2="181" gradientUnits="userSpaceOnUse"><stop offset="0" stop-color="#10b8ff"/><stop offset="0.15" stop-color="#18aaff"/><stop offset="0.55" stop-color="#5a6cff"/><stop offset="1" stop-color="#b42cff"/></linearGradient>
<linearGradient id="gY" x1="0" y1="116" x2="0" y2="182" gradientUnits="userSpaceOnUse"><stop offset="0" stop-color="#ffc61a"/><stop offset="1" stop-color="#ff7a1c"/></linearGradient>
<linearGradient id="gN" x1="163" y1="40" x2="191" y2="46" gradientUnits="userSpaceOnUse"><stop offset="0" stop-color="#aa38ff"/><stop offset="0.450" stop-color="#7a5cff"/><stop offset="1" stop-color="#2f92ff"/></linearGradient>
<filter id="glow" x="-20%" y="-20%" width="140%" height="140%"><feGaussianBlur in="SourceAlpha" stdDeviation="3.500" result="b"/><feFlood flood-color="#ffffff" flood-opacity="0.750"/><feComposite in2="b" operator="in" result="g"/><feMerge><feMergeNode in="g"/><feMergeNode in="SourceGraphic"/></feMerge></filter>
<filter id="glow2" x="-50%" y="-50%" width="200%" height="200%"><feGaussianBlur in="SourceAlpha" stdDeviation="2" result="b"/><feFlood flood-color="#ffffff" flood-opacity="0.800"/><feComposite in2="b" operator="in" result="g"/><feMerge><feMergeNode in="g"/><feMergeNode in="SourceGraphic"/></feMerge></filter>
</defs>
<g filter="url(#glow)">
<text x="37" y="178" font-family="'DejaVu Sans',sans-serif" font-weight="bold" font-size="147" fill="url(#gA)" stroke="url(#gA)" stroke-width="6" stroke-linejoin="round" textLength="124" lengthAdjust="spacingAndGlyphs">A</text>
<text x="169.500" y="164.500" font-family="'Liberation Sans',sans-serif" font-weight="bold" font-size="87" fill="url(#gY)" stroke="url(#gY)" stroke-width="2.500" stroke-linejoin="round" textLength="150" lengthAdjust="spacingAndGlyphs">yug</text>
</g>
<g filter="url(#glow2)">
<path d="M163 59.600 L164.500 33.500 L171 31 L176 26.500 L191 32.500 L190 38 L188 46 L183 51.500 Z" fill="url(#gN)"/>
<path d="M176.300 21.800 L192.500 28.800 L190.700 33.400 L174.500 26.400Z" fill="#ff9d1c"/><path d="M182.500 19.600 L191.800 23.800 L190.800 26.600 L181.500 22.400Z" fill="#3f7fd8"/>
<path d="M175.200 41.900 L163.800 58.800" stroke="#fff" stroke-width="1.200"/><circle cx="175.200" cy="41.900" r="1.900" fill="#f4eaff"/>
</g>
<path d="M132.200 47.800 C150 44 154 58 157 65.200 C160 74 170 82 182.200 78.100" fill="none" stroke="#8fa8e8" stroke-width="0.800" opacity="0.850"/><path d="M156.300 45V82.500" stroke="#6d7fb0" stroke-width="0.700" opacity="0.800"/>
<g filter="url(#glow2)"><circle cx="132.300" cy="47.800" r="1.700" fill="#fff"/><rect x="155.400" y="63.600" width="3.200" height="3.200" fill="#fff"/><circle cx="182.300" cy="78.100" r="1.700" fill="#fff"/></g>
</svg>
<svg style="left:840px;top:1000px;pointer-events:none" width="320" height="60" viewBox="840 1000 320 60">
<defs><linearGradient id="gC" x1="0" y1="0" x2="1" y2="1"><stop offset="0" stop-color="#ffc81a"/><stop offset="1" stop-color="#ff951c"/></linearGradient><linearGradient id="gA2" x1="0" y1="1018" x2="0" y2="1042" gradientUnits="userSpaceOnUse"><stop offset="0" stop-color="#18aaff"/><stop offset="1" stop-color="#b42cff"/></linearGradient></defs>
<circle cx="870.500" cy="1029" r="21.500" fill="#fcb61c"/>
<text x="858" y="1041.500" font-family="'DejaVu Sans',sans-serif" font-weight="bold" font-size="25" fill="url(#gA2)" stroke="url(#gA2)" stroke-width="1.800" stroke-linejoin="round" textLength="21" lengthAdjust="spacingAndGlyphs">A</text>
<path d="M883.500 1014.500 l2 3.500 l-4.500 3z" fill="#8a4cff"/><path d="M878 1019 l3 2" stroke="#c79cff" stroke-width="0.600"/>
<text x="903" y="1039" font-family="'Liberation Sans',sans-serif" font-weight="bold" font-size="27" fill="#ffffff" textLength="241.500" lengthAdjust="spacingAndGlyphs" style="paint-order:stroke" stroke="rgba(0,0,0,0.250)" stroke-width="1.500">www.toonyug.com</text>
</svg>
</body></html>
